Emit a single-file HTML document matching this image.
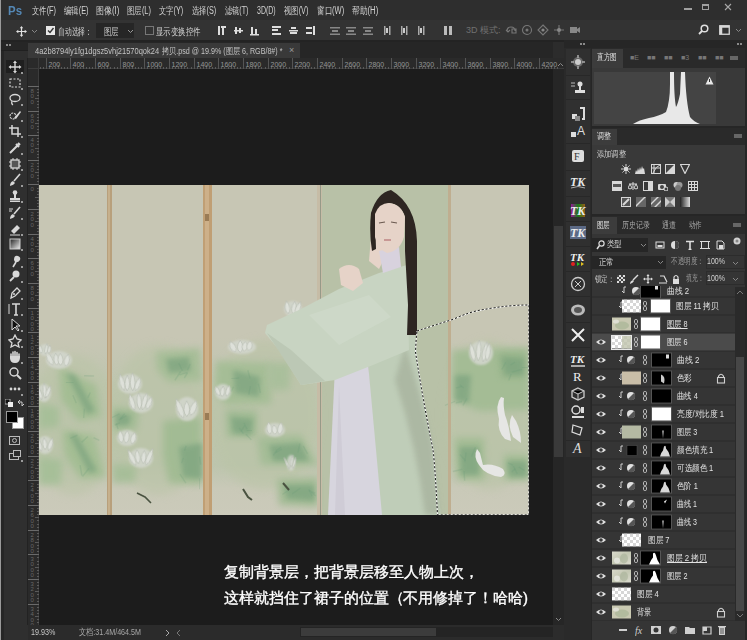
<!DOCTYPE html><html><head><meta charset="utf-8"><style>
html,body{margin:0;padding:0;}
body{width:747px;height:640px;overflow:hidden;position:relative;background:#2c2c2c;font-family:"Liberation Sans", sans-serif;}
div,svg{box-sizing:border-box;}
</style></head><body>
<div style="position:absolute;left:0px;top:0px;width:747px;height:20px;background:#2e2e2e;"></div>
<div style="position:absolute;left:8px;top:2.70px;font-size:13px;line-height:15.60px;color:#5487b4;white-space:nowrap;transform:scaleX(0.8802);transform-origin:0 0;font-weight:bold;">Ps</div>
<div style="position:absolute;left:32px;top:5.30px;font-size:10px;line-height:12.00px;color:#d2d2d2;white-space:nowrap;transform:scaleX(0.7321);transform-origin:0 0;">文件(F)</div>
<div style="position:absolute;left:63.5px;top:5.30px;font-size:10px;line-height:12.00px;color:#d2d2d2;white-space:nowrap;transform:scaleX(0.7348);transform-origin:0 0;">编辑(E)</div>
<div style="position:absolute;left:96px;top:5.30px;font-size:10px;line-height:12.00px;color:#d2d2d2;white-space:nowrap;transform:scaleX(0.7979);transform-origin:0 0;">图像(I)</div>
<div style="position:absolute;left:127px;top:5.30px;font-size:10px;line-height:12.00px;color:#d2d2d2;white-space:nowrap;transform:scaleX(0.7445);transform-origin:0 0;">图层(L)</div>
<div style="position:absolute;left:159.4px;top:5.30px;font-size:10px;line-height:12.00px;color:#d2d2d2;white-space:nowrap;transform:scaleX(0.7288);transform-origin:0 0;">文字(Y)</div>
<div style="position:absolute;left:192.2px;top:5.30px;font-size:10px;line-height:12.00px;color:#d2d2d2;white-space:nowrap;transform:scaleX(0.7288);transform-origin:0 0;">选择(S)</div>
<div style="position:absolute;left:225px;top:5.30px;font-size:10px;line-height:12.00px;color:#d2d2d2;white-space:nowrap;transform:scaleX(0.7138);transform-origin:0 0;">滤镜(T)</div>
<div style="position:absolute;left:256.6px;top:5.30px;font-size:10px;line-height:12.00px;color:#d2d2d2;white-space:nowrap;transform:scaleX(0.7011);transform-origin:0 0;">3D(D)</div>
<div style="position:absolute;left:283.7px;top:5.30px;font-size:10px;line-height:12.00px;color:#d2d2d2;white-space:nowrap;transform:scaleX(0.7318);transform-origin:0 0;">视图(V)</div>
<div style="position:absolute;left:316.5px;top:5.30px;font-size:10px;line-height:12.00px;color:#d2d2d2;white-space:nowrap;transform:scaleX(0.7533);transform-origin:0 0;">窗口(W)</div>
<div style="position:absolute;left:352.1px;top:5.30px;font-size:10px;line-height:12.00px;color:#d2d2d2;white-space:nowrap;transform:scaleX(0.7760);transform-origin:0 0;">帮助(H)</div>
<div style="position:absolute;left:684px;top:8px;width:8px;height:1.5px;background:#a0a0a0;"></div>
<div style="position:absolute;left:702px;top:4px;width:7px;height:6px;background:transparent;border:1px solid #a0a0a0;border-top-width:2px;"></div>
<svg style="position:absolute;left:724px;top:3px;" width="8" height="8" viewBox="0 0 8 8"><path d="M1 1L7 7M7 1L1 7" stroke="#a8a8a8" stroke-width="1.1"/></svg>
<div style="position:absolute;left:0px;top:20px;width:747px;height:20px;background:#333333;"></div>
<div style="position:absolute;left:0px;top:40px;width:747px;height:2px;background:#232323;"></div>
<div style="position:absolute;left:0;top:0;width:1px;height:640px;background:#9a9a9a"></div>
<svg style="position:absolute;left:16px;top:26px;" width="11" height="11" viewBox="0 0 11 11"><path d="M5.5 1V10M1 5.5H10" stroke="#e0e0e0" stroke-width="1.2"/><path d="M5.5 0L3.8 2.3H7.2ZM5.5 11L3.8 8.7H7.2ZM0 5.5L2.3 3.8V7.2ZM11 5.5L8.7 3.8V7.2Z" fill="#e0e0e0"/></svg>
<svg style="position:absolute;left:31px;top:29px;" width="7" height="5" viewBox="0 0 7 5"><path d="M1 1L3.5 3.5L6 1" stroke="#888" fill="none"/></svg>
<div style="position:absolute;left:46px;top:26px;width:9px;height:9px;background:#e8e8e8;"></div>
<svg style="position:absolute;left:46px;top:26px;" width="9" height="9" viewBox="0 0 9 9"><path d="M2 4.5L4 6.5L7.5 2" stroke="#333" stroke-width="1.4" fill="none"/></svg>
<div style="position:absolute;left:58.2px;top:26.00px;font-size:10px;line-height:12.00px;color:#d0d0d0;white-space:nowrap;transform:scaleX(0.6820);transform-origin:0 0;">自动选择：</div>
<div style="position:absolute;left:96px;top:23px;width:38px;height:15px;background:#262626;"></div>
<div style="position:absolute;left:103.7px;top:26.00px;font-size:10px;line-height:12.00px;color:#d0d0d0;white-space:nowrap;transform:scaleX(0.7400);transform-origin:0 0;">图层</div>
<svg style="position:absolute;left:127px;top:29px;" width="7" height="5" viewBox="0 0 7 5"><path d="M1 1L3.5 3.5L6 1" stroke="#999" fill="none"/></svg>
<div style="position:absolute;left:145px;top:26px;width:9px;height:9px;background:transparent;border:1px solid #777;"></div>
<div style="position:absolute;left:156px;top:26.00px;font-size:10px;line-height:12.00px;color:#d0d0d0;white-space:nowrap;transform:scaleX(0.7400);transform-origin:0 0;">显示变换控件</div>
<svg style="position:absolute;left:217px;top:25px;" width="11" height="11" viewBox="0 0 11 11"><rect x="1" y="1" width="2" height="9" fill="#ddd"/><rect x="4" y="1" width="5" height="2" fill="#ddd"/><rect x="5" y="3" width="2" height="7" fill="#ddd"/></svg>
<svg style="position:absolute;left:233px;top:25px;" width="11" height="11" viewBox="0 0 11 11"><rect x="1" y="5" width="9" height="1.5" fill="#ddd"/><rect x="2" y="2" width="2" height="7" fill="#ddd"/><rect x="6" y="3" width="2" height="5" fill="#ddd"/></svg>
<svg style="position:absolute;left:249px;top:25px;" width="11" height="11" viewBox="0 0 11 11"><rect x="1" y="9" width="9" height="1.5" fill="#ddd"/><rect x="2" y="2" width="2" height="7" fill="#ddd"/><rect x="6" y="4" width="2" height="5" fill="#ddd"/></svg>
<svg style="position:absolute;left:271px;top:25px;" width="11" height="11" viewBox="0 0 11 11"><rect x="1" y="1" width="9" height="2" fill="#ddd"/><rect x="1" y="4" width="6" height="2" fill="#ddd"/><rect x="1" y="8" width="9" height="2" fill="#ddd"/></svg>
<svg style="position:absolute;left:288px;top:25px;" width="11" height="11" viewBox="0 0 11 11"><rect x="1" y="5" width="9" height="1.5" fill="#ddd"/><rect x="3" y="2" width="5" height="2" fill="#ddd"/><rect x="2" y="7" width="7" height="2" fill="#ddd"/></svg>
<svg style="position:absolute;left:304px;top:25px;" width="11" height="11" viewBox="0 0 11 11"><rect x="9" y="1" width="2" height="9" fill="#ddd"/><rect x="2" y="2" width="6" height="2" fill="#ddd"/><rect x="2" y="7" width="6" height="2" fill="#ddd"/></svg>
<svg style="position:absolute;left:329px;top:25px;" width="12" height="11" viewBox="0 0 12 11"><rect x="1" y="2" width="10" height="1.5" fill="#888"/><rect x="3" y="5" width="6" height="2" fill="#888"/><rect x="1" y="8.5" width="10" height="1.5" fill="#888"/></svg>
<svg style="position:absolute;left:345px;top:25px;" width="12" height="11" viewBox="0 0 12 11"><rect x="1" y="2" width="10" height="1.5" fill="#888"/><rect x="3" y="5" width="6" height="2" fill="#888"/><rect x="1" y="8.5" width="10" height="1.5" fill="#888"/></svg>
<svg style="position:absolute;left:362px;top:25px;" width="12" height="11" viewBox="0 0 12 11"><rect x="1" y="2" width="10" height="1.5" fill="#888"/><rect x="3" y="5" width="6" height="2" fill="#888"/><rect x="1" y="8.5" width="10" height="1.5" fill="#888"/></svg>
<svg style="position:absolute;left:382px;top:25px;" width="10" height="11" viewBox="0 0 10 11"><rect x="2" y="1" width="1.5" height="9" fill="#aaa"/><rect x="4" y="3" width="2" height="5" fill="#ccc"/><rect x="7" y="1" width="1.5" height="9" fill="#aaa"/></svg>
<svg style="position:absolute;left:399px;top:25px;" width="10" height="11" viewBox="0 0 10 11"><rect x="2" y="1" width="1.5" height="9" fill="#aaa"/><rect x="4" y="3" width="2" height="5" fill="#ccc"/><rect x="7" y="1" width="1.5" height="9" fill="#aaa"/></svg>
<svg style="position:absolute;left:416px;top:25px;" width="10" height="11" viewBox="0 0 10 11"><rect x="2" y="1" width="1.5" height="9" fill="#aaa"/><rect x="4" y="3" width="2" height="5" fill="#ccc"/><rect x="7" y="1" width="1.5" height="9" fill="#aaa"/></svg>
<svg style="position:absolute;left:443px;top:25px;" width="10" height="11" viewBox="0 0 10 11"><rect x="1" y="1" width="3" height="9" fill="#bbb"/><rect x="6" y="1" width="3" height="9" fill="#bbb"/></svg>
<div style="position:absolute;left:466px;top:25px;font-size:9px;line-height:11px;color:#707070;white-space:nowrap;">3D 模式:</div>
<svg style="position:absolute;left:505px;top:24px;" width="12" height="12" viewBox="0 0 12 12"><path d="M2 7Q2 3 6 3Q10 3 10 7M1 6L3 8L5 6M7 5H11V9H7Z" stroke="#777" fill="none" stroke-width="1.1"/></svg>
<svg style="position:absolute;left:521px;top:24px;" width="12" height="12" viewBox="0 0 12 12"><circle cx="6" cy="6" r="4.5" stroke="#777" fill="none" stroke-width="1.1"/><circle cx="6" cy="6" r="1.5" fill="#777"/></svg>
<svg style="position:absolute;left:537px;top:24px;" width="12" height="12" viewBox="0 0 12 12"><path d="M6 1L11 6L6 11L1 6Z" stroke="#777" fill="none" stroke-width="1.1"/><circle cx="6" cy="6" r="1.6" fill="#888"/></svg>
<svg style="position:absolute;left:553px;top:24px;" width="12" height="12" viewBox="0 0 12 12"><path d="M6 1V11M1 6H11" stroke="#777" stroke-width="1.1"/><circle cx="6" cy="6" r="2" fill="#888"/></svg>
<svg style="position:absolute;left:569px;top:24px;" width="12" height="12" viewBox="0 0 12 12"><rect x="1" y="3" width="7" height="6" fill="#888"/><path d="M8 5L11 3V9L8 7Z" fill="#888"/></svg>
<svg style="position:absolute;left:698px;top:24px;" width="11" height="11" viewBox="0 0 11 11"><circle cx="6.5" cy="4.5" r="3.3" stroke="#e0e0e0" stroke-width="1.5" fill="none"/><path d="M4 7L1 10" stroke="#e0e0e0" stroke-width="1.8"/></svg>
<svg style="position:absolute;left:719px;top:25px;" width="11" height="10" viewBox="0 0 11 10"><rect x="0.75" y="0.75" width="9.5" height="8.5" stroke="#d8d8d8" fill="none" stroke-width="1.3"/><rect x="0.75" y="0.75" width="9.5" height="2" fill="#d8d8d8"/><rect x="0.75" y="0.75" width="2.5" height="8.5" fill="#d8d8d8"/></svg>
<svg style="position:absolute;left:735px;top:28px;" width="7" height="5" viewBox="0 0 7 5"><path d="M1 1L3.5 3.5L6 1" stroke="#888" fill="none"/></svg>
<div style="position:absolute;left:1px;top:42px;width:27px;height:598px;background:#2f2f2f;"></div>
<div style="position:absolute;left:1px;top:42px;width:3px;height:598px;background:#262626;"></div>
<div style="position:absolute;left:27px;top:58px;width:1px;height:567px;background:#222222;"></div>
<div style="position:absolute;left:1px;top:42px;width:27px;height:8px;background:#262626;"></div>
<div style="position:absolute;left:6px;top:44px;width:2px;height:2px;background:#8a8a8a;"></div>
<div style="position:absolute;left:9px;top:44px;width:2px;height:2px;background:#8a8a8a;"></div>
<div style="position:absolute;left:1px;top:50px;width:27px;height:1px;background:#202020;"></div>
<div style="position:absolute;left:6px;top:60px;width:18px;height:13px;background:#1f1f1f;"></div>
<svg style="position:absolute;left:8px;top:60px;" width="14" height="14" viewBox="0 0 14 14"><path d="M7 2V12M2 7H12" stroke="#d8d8d8" stroke-width="1.4"/><path d="M7 0.5L5 3H9ZM7 13.5L5 11H9ZM0.5 7L3 5V9ZM13.5 7L11 5V9Z" fill="#d8d8d8"/></svg>
<svg style="position:absolute;left:8px;top:76px;" width="14" height="14" viewBox="0 0 14 14"><rect x="2" y="3" width="10" height="8" stroke="#d8d8d8" stroke-dasharray="2 1.5" fill="none" stroke-width="1.2"/></svg>
<svg style="position:absolute;left:8px;top:92px;" width="14" height="14" viewBox="0 0 14 14"><ellipse cx="7" cy="6" rx="5" ry="3.5" stroke="#d8d8d8" fill="none" stroke-width="1.3"/><path d="M4 9Q3 12 5 13" stroke="#d8d8d8" fill="none" stroke-width="1.2"/></svg>
<svg style="position:absolute;left:8px;top:108px;" width="14" height="14" viewBox="0 0 14 14"><circle cx="5" cy="8" r="3" stroke="#d8d8d8" fill="none" stroke-width="1.2" stroke-dasharray="2 1"/><path d="M6 10L12 3L13 4L8 11Z" fill="#d8d8d8"/></svg>
<svg style="position:absolute;left:8px;top:124px;" width="14" height="14" viewBox="0 0 14 14"><path d="M4 1V10H13M1 4H10V13" stroke="#d8d8d8" stroke-width="1.5" fill="none"/></svg>
<svg style="position:absolute;left:8px;top:141px;" width="14" height="14" viewBox="0 0 14 14"><path d="M2 12L9 5M8 3L11 6M10 2L12 4" stroke="#d8d8d8" stroke-width="2" fill="none"/></svg>
<svg style="position:absolute;left:8px;top:157px;" width="14" height="14" viewBox="0 0 14 14"><rect x="3" y="3" width="8" height="8" stroke="#d8d8d8" fill="#555" stroke-width="1.3"/><path d="M5 1V3M9 1V3M5 11V13M9 11V13M1 5H3M1 9H3M11 5H13M11 9H13" stroke="#d8d8d8"/></svg>
<svg style="position:absolute;left:8px;top:173px;" width="14" height="14" viewBox="0 0 14 14"><path d="M12 1L6 8" stroke="#d8d8d8" stroke-width="1.6"/><path d="M5 8Q2 9 2 13Q6 12 7 10Z" fill="#d8d8d8"/></svg>
<svg style="position:absolute;left:8px;top:189px;" width="14" height="14" viewBox="0 0 14 14"><circle cx="7" cy="3.5" r="2.3" fill="#d8d8d8"/><rect x="6" y="5" width="2" height="4" fill="#d8d8d8"/><rect x="2" y="9" width="10" height="2.5" fill="#d8d8d8"/><rect x="2" y="12" width="10" height="1" fill="#d8d8d8"/></svg>
<svg style="position:absolute;left:8px;top:206px;" width="14" height="14" viewBox="0 0 14 14"><path d="M12 1L6 8" stroke="#d8d8d8" stroke-width="1.6"/><path d="M5 8Q2 9 2 13Q6 12 7 10Z" fill="#d8d8d8"/><path d="M1 3H5M1 5H4" stroke="#d8d8d8"/></svg>
<svg style="position:absolute;left:8px;top:222px;" width="14" height="14" viewBox="0 0 14 14"><path d="M3 9L9 3L12 6L6 12Z" fill="#d8d8d8"/><path d="M2 13H12" stroke="#d8d8d8"/></svg>
<svg style="position:absolute;left:8px;top:237px;" width="14" height="14" viewBox="0 0 14 14"><defs><linearGradient id="gg" x1="0" x2="1" y1="0" y2="1"><stop offset="0" stop-color="#222"/><stop offset="1" stop-color="#eee"/></linearGradient></defs><rect x="2" y="2" width="10" height="10" fill="url(#gg)" stroke="#ccc"/></svg>
<svg style="position:absolute;left:8px;top:254px;" width="14" height="14" viewBox="0 0 14 14"><path d="M5 13L8 8" stroke="#d8d8d8" stroke-width="1.6"/><path d="M6 6Q6 1 10 2Q13 3 12 6Q10 9 7 8Z" fill="#d8d8d8"/></svg>
<svg style="position:absolute;left:8px;top:269px;" width="14" height="14" viewBox="0 0 14 14"><circle cx="8" cy="5" r="3.5" fill="#d8d8d8"/><path d="M6 8L2 12" stroke="#d8d8d8" stroke-width="1.8"/></svg>
<svg style="position:absolute;left:8px;top:286px;" width="14" height="14" viewBox="0 0 14 14"><path d="M3 12L4 7L9 2L12 5L7 10Z" stroke="#d8d8d8" fill="none" stroke-width="1.3"/><circle cx="6" cy="8" r="1" fill="#d8d8d8"/></svg>
<svg style="position:absolute;left:8px;top:302px;" width="14" height="14" viewBox="0 0 14 14"><path d="M4 2H12M8 2V13M6 13H10" stroke="#d8d8d8" stroke-width="1.6"/><path d="M1 2V12" stroke="#d8d8d8" stroke-width="1"/></svg>
<svg style="position:absolute;left:8px;top:318px;" width="14" height="14" viewBox="0 0 14 14"><path d="M4 1L4 12L7 9L10 13L11 12L8 8L12 8Z" fill="#111" stroke="#d8d8d8" stroke-width="1"/></svg>
<svg style="position:absolute;left:8px;top:334px;" width="14" height="14" viewBox="0 0 14 14"><path d="M7 1L9 5L13 6L10 9L11 13L7 11L3 13L4 9L1 6L5 5Z" stroke="#d8d8d8" fill="none" stroke-width="1.3"/></svg>
<svg style="position:absolute;left:8px;top:350px;" width="14" height="14" viewBox="0 0 14 14"><path d="M3 8V4M5 7V2M7 7V1.5M9 7V2.5M11 8V4" stroke="#d8d8d8" stroke-width="1.6" stroke-linecap="round"/><path d="M2 8Q2 13 7 13Q12 13 12 7V6H2Z" fill="#d8d8d8"/></svg>
<svg style="position:absolute;left:8px;top:366px;" width="14" height="14" viewBox="0 0 14 14"><circle cx="6" cy="6" r="4" stroke="#d8d8d8" fill="none" stroke-width="1.5"/><path d="M9 9L13 13" stroke="#d8d8d8" stroke-width="2"/></svg>
<svg style="position:absolute;left:8px;top:382px;" width="14" height="14" viewBox="0 0 14 14"><circle cx="3" cy="7" r="1.4" fill="#d8d8d8"/><circle cx="7" cy="7" r="1.4" fill="#d8d8d8"/><circle cx="11" cy="7" r="1.4" fill="#d8d8d8"/></svg>
<div style="position:absolute;left:21px;top:72px;width:2px;height:2px;background:#9a9a9a;"></div>
<div style="position:absolute;left:21px;top:88px;width:2px;height:2px;background:#9a9a9a;"></div>
<div style="position:absolute;left:21px;top:104px;width:2px;height:2px;background:#9a9a9a;"></div>
<div style="position:absolute;left:21px;top:120px;width:2px;height:2px;background:#9a9a9a;"></div>
<div style="position:absolute;left:21px;top:136px;width:2px;height:2px;background:#9a9a9a;"></div>
<div style="position:absolute;left:21px;top:153px;width:2px;height:2px;background:#9a9a9a;"></div>
<div style="position:absolute;left:21px;top:169px;width:2px;height:2px;background:#9a9a9a;"></div>
<div style="position:absolute;left:21px;top:185px;width:2px;height:2px;background:#9a9a9a;"></div>
<div style="position:absolute;left:21px;top:201px;width:2px;height:2px;background:#9a9a9a;"></div>
<div style="position:absolute;left:21px;top:218px;width:2px;height:2px;background:#9a9a9a;"></div>
<div style="position:absolute;left:21px;top:234px;width:2px;height:2px;background:#9a9a9a;"></div>
<div style="position:absolute;left:21px;top:249px;width:2px;height:2px;background:#9a9a9a;"></div>
<div style="position:absolute;left:21px;top:266px;width:2px;height:2px;background:#9a9a9a;"></div>
<div style="position:absolute;left:21px;top:281px;width:2px;height:2px;background:#9a9a9a;"></div>
<div style="position:absolute;left:21px;top:298px;width:2px;height:2px;background:#9a9a9a;"></div>
<div style="position:absolute;left:21px;top:314px;width:2px;height:2px;background:#9a9a9a;"></div>
<div style="position:absolute;left:21px;top:330px;width:2px;height:2px;background:#9a9a9a;"></div>
<div style="position:absolute;left:21px;top:346px;width:2px;height:2px;background:#9a9a9a;"></div>
<div style="position:absolute;left:21px;top:362px;width:2px;height:2px;background:#9a9a9a;"></div>
<div style="position:absolute;left:21px;top:394px;width:2px;height:2px;background:#9a9a9a;"></div>
<svg style="position:absolute;left:5px;top:399px;" width="8" height="8" viewBox="0 0 8 8"><rect x="0" y="0" width="5" height="5" fill="#111" stroke="#ccc" stroke-width="0.8"/><rect x="3" y="3" width="5" height="5" fill="#eee"/></svg>
<svg style="position:absolute;left:17px;top:399px;" width="8" height="8" viewBox="0 0 8 8"><path d="M1 3H5V7M3 1L1 3L3 5M5 7L7 5" stroke="#ccc" fill="none"/></svg>
<div style="position:absolute;left:12px;top:417px;width:12px;height:12px;background:#ffffff;border:1px solid #9a9a9a;"></div>
<div style="position:absolute;left:6px;top:411px;width:12px;height:12px;background:#000000;border:1px solid #9a9a9a;"></div>
<div style="position:absolute;left:9px;top:436px;width:11px;height:9px;background:transparent;border:1px solid #bbb;"></div>
<div style="position:absolute;left:12px;top:438px;width:5px;height:5px;background:transparent;border:1px solid #bbb;border-radius:50%;"></div>
<div style="position:absolute;left:9px;top:453px;width:10px;height:7px;background:#2c2c2c;border:1px solid #bbb;"></div>
<div style="position:absolute;left:13px;top:450px;width:8px;height:7px;background:#2c2c2c;border:1px solid #bbb;"></div>
<div style="position:absolute;left:21px;top:460px;width:2px;height:2px;background:#9a9a9a;"></div>
<div style="position:absolute;left:28px;top:42px;width:525px;height:16px;background:#262626;"></div>
<div style="position:absolute;left:28px;top:43px;width:272px;height:15px;background:#393939;"></div>
<div style="position:absolute;left:35.1px;top:46.10px;font-size:9px;line-height:10.80px;color:#c4c4c4;white-space:nowrap;transform:scaleX(0.8321);transform-origin:0 0;">4a2b8794ly1fg1dgsz5vhj21570qok24</div>
<div style="position:absolute;left:162px;top:46.10px;font-size:9px;line-height:10.80px;color:#c4c4c4;white-space:nowrap;transform:scaleX(0.7944);transform-origin:0 0;">拷贝.psd @ 19.9% (图层 6, RGB/8#) *</div>
<div style="position:absolute;left:289px;top:45px;font-size:9px;line-height:11px;color:#999;white-space:nowrap;">×</div>
<div style="position:absolute;left:28px;top:58px;width:536px;height:11px;background:#2a2a2a;"></div>
<div style="position:absolute;left:28px;top:58px;width:11px;height:567px;background:#2a2a2a;"></div>
<div style="position:absolute;left:28px;top:68px;width:536px;height:1px;background:#3c3c3c;"></div>
<div style="position:absolute;left:38px;top:58px;width:1px;height:567px;background:#3c3c3c;"></div>
<svg style="position:absolute;left:0px;top:0px;" width="747" height="70" viewBox="0 0 747 70"><rect x="46" y="58" width="1" height="11" fill="#555555"/><rect x="49" y="67" width="1" height="2" fill="#5a5a5a"/><rect x="52" y="67" width="1" height="2" fill="#5a5a5a"/><rect x="55" y="67" width="1" height="2" fill="#5a5a5a"/><rect x="58" y="65" width="1" height="4" fill="#5a5a5a"/><rect x="61" y="67" width="1" height="2" fill="#5a5a5a"/><rect x="64" y="67" width="1" height="2" fill="#5a5a5a"/><rect x="67" y="67" width="1" height="2" fill="#5a5a5a"/><text x="48.5" y="66.5" font-size="7" fill="#959595" font-family="Liberation Sans">200</text><rect x="70" y="58" width="1" height="11" fill="#555555"/><rect x="73" y="67" width="1" height="2" fill="#5a5a5a"/><rect x="77" y="67" width="1" height="2" fill="#5a5a5a"/><rect x="80" y="67" width="1" height="2" fill="#5a5a5a"/><rect x="83" y="65" width="1" height="4" fill="#5a5a5a"/><rect x="86" y="67" width="1" height="2" fill="#5a5a5a"/><rect x="89" y="67" width="1" height="2" fill="#5a5a5a"/><rect x="92" y="67" width="1" height="2" fill="#5a5a5a"/><text x="72.5" y="66.5" font-size="7" fill="#959595" font-family="Liberation Sans">400</text><rect x="95" y="58" width="1" height="11" fill="#555555"/><rect x="98" y="67" width="1" height="2" fill="#5a5a5a"/><rect x="101" y="67" width="1" height="2" fill="#5a5a5a"/><rect x="104" y="67" width="1" height="2" fill="#5a5a5a"/><rect x="107" y="65" width="1" height="4" fill="#5a5a5a"/><rect x="110" y="67" width="1" height="2" fill="#5a5a5a"/><rect x="114" y="67" width="1" height="2" fill="#5a5a5a"/><rect x="117" y="67" width="1" height="2" fill="#5a5a5a"/><text x="97.5" y="66.5" font-size="7" fill="#959595" font-family="Liberation Sans">600</text><rect x="120" y="58" width="1" height="11" fill="#555555"/><rect x="123" y="67" width="1" height="2" fill="#5a5a5a"/><rect x="126" y="67" width="1" height="2" fill="#5a5a5a"/><rect x="129" y="67" width="1" height="2" fill="#5a5a5a"/><rect x="132" y="65" width="1" height="4" fill="#5a5a5a"/><rect x="135" y="67" width="1" height="2" fill="#5a5a5a"/><rect x="138" y="67" width="1" height="2" fill="#5a5a5a"/><rect x="141" y="67" width="1" height="2" fill="#5a5a5a"/><text x="122.5" y="66.5" font-size="7" fill="#959595" font-family="Liberation Sans">800</text><rect x="144" y="58" width="1" height="11" fill="#555555"/><rect x="147" y="67" width="1" height="2" fill="#5a5a5a"/><rect x="151" y="67" width="1" height="2" fill="#5a5a5a"/><rect x="154" y="67" width="1" height="2" fill="#5a5a5a"/><rect x="157" y="65" width="1" height="4" fill="#5a5a5a"/><rect x="160" y="67" width="1" height="2" fill="#5a5a5a"/><rect x="163" y="67" width="1" height="2" fill="#5a5a5a"/><rect x="166" y="67" width="1" height="2" fill="#5a5a5a"/><text x="146.5" y="66.5" font-size="7" fill="#959595" font-family="Liberation Sans">1000</text><rect x="169" y="58" width="1" height="11" fill="#555555"/><rect x="172" y="67" width="1" height="2" fill="#5a5a5a"/><rect x="175" y="67" width="1" height="2" fill="#5a5a5a"/><rect x="178" y="67" width="1" height="2" fill="#5a5a5a"/><rect x="181" y="65" width="1" height="4" fill="#5a5a5a"/><rect x="184" y="67" width="1" height="2" fill="#5a5a5a"/><rect x="187" y="67" width="1" height="2" fill="#5a5a5a"/><rect x="191" y="67" width="1" height="2" fill="#5a5a5a"/><text x="171.5" y="66.5" font-size="7" fill="#959595" font-family="Liberation Sans">1200</text><rect x="194" y="58" width="1" height="11" fill="#555555"/><rect x="197" y="67" width="1" height="2" fill="#5a5a5a"/><rect x="200" y="67" width="1" height="2" fill="#5a5a5a"/><rect x="203" y="67" width="1" height="2" fill="#5a5a5a"/><rect x="206" y="65" width="1" height="4" fill="#5a5a5a"/><rect x="209" y="67" width="1" height="2" fill="#5a5a5a"/><rect x="212" y="67" width="1" height="2" fill="#5a5a5a"/><rect x="215" y="67" width="1" height="2" fill="#5a5a5a"/><text x="196.5" y="66.5" font-size="7" fill="#959595" font-family="Liberation Sans">1400</text><rect x="218" y="58" width="1" height="11" fill="#555555"/><rect x="221" y="67" width="1" height="2" fill="#5a5a5a"/><rect x="224" y="67" width="1" height="2" fill="#5a5a5a"/><rect x="228" y="67" width="1" height="2" fill="#5a5a5a"/><rect x="231" y="65" width="1" height="4" fill="#5a5a5a"/><rect x="234" y="67" width="1" height="2" fill="#5a5a5a"/><rect x="237" y="67" width="1" height="2" fill="#5a5a5a"/><rect x="240" y="67" width="1" height="2" fill="#5a5a5a"/><text x="220.5" y="66.5" font-size="7" fill="#959595" font-family="Liberation Sans">1600</text><rect x="243" y="58" width="1" height="11" fill="#555555"/><rect x="246" y="67" width="1" height="2" fill="#5a5a5a"/><rect x="249" y="67" width="1" height="2" fill="#5a5a5a"/><rect x="252" y="67" width="1" height="2" fill="#5a5a5a"/><rect x="255" y="65" width="1" height="4" fill="#5a5a5a"/><rect x="258" y="67" width="1" height="2" fill="#5a5a5a"/><rect x="261" y="67" width="1" height="2" fill="#5a5a5a"/><rect x="265" y="67" width="1" height="2" fill="#5a5a5a"/><text x="245.5" y="66.5" font-size="7" fill="#959595" font-family="Liberation Sans">1800</text><rect x="268" y="58" width="1" height="11" fill="#555555"/><rect x="271" y="67" width="1" height="2" fill="#5a5a5a"/><rect x="274" y="67" width="1" height="2" fill="#5a5a5a"/><rect x="277" y="67" width="1" height="2" fill="#5a5a5a"/><rect x="280" y="65" width="1" height="4" fill="#5a5a5a"/><rect x="283" y="67" width="1" height="2" fill="#5a5a5a"/><rect x="286" y="67" width="1" height="2" fill="#5a5a5a"/><rect x="289" y="67" width="1" height="2" fill="#5a5a5a"/><text x="270.5" y="66.5" font-size="7" fill="#959595" font-family="Liberation Sans">2000</text><rect x="292" y="58" width="1" height="11" fill="#555555"/><rect x="295" y="67" width="1" height="2" fill="#5a5a5a"/><rect x="298" y="67" width="1" height="2" fill="#5a5a5a"/><rect x="302" y="67" width="1" height="2" fill="#5a5a5a"/><rect x="305" y="65" width="1" height="4" fill="#5a5a5a"/><rect x="308" y="67" width="1" height="2" fill="#5a5a5a"/><rect x="311" y="67" width="1" height="2" fill="#5a5a5a"/><rect x="314" y="67" width="1" height="2" fill="#5a5a5a"/><text x="294.5" y="66.5" font-size="7" fill="#959595" font-family="Liberation Sans">2200</text><rect x="317" y="58" width="1" height="11" fill="#555555"/><rect x="320" y="67" width="1" height="2" fill="#5a5a5a"/><rect x="323" y="67" width="1" height="2" fill="#5a5a5a"/><rect x="326" y="67" width="1" height="2" fill="#5a5a5a"/><rect x="329" y="65" width="1" height="4" fill="#5a5a5a"/><rect x="332" y="67" width="1" height="2" fill="#5a5a5a"/><rect x="335" y="67" width="1" height="2" fill="#5a5a5a"/><rect x="339" y="67" width="1" height="2" fill="#5a5a5a"/><text x="319.5" y="66.5" font-size="7" fill="#959595" font-family="Liberation Sans">2400</text><rect x="342" y="58" width="1" height="11" fill="#555555"/><rect x="345" y="67" width="1" height="2" fill="#5a5a5a"/><rect x="348" y="67" width="1" height="2" fill="#5a5a5a"/><rect x="351" y="67" width="1" height="2" fill="#5a5a5a"/><rect x="354" y="65" width="1" height="4" fill="#5a5a5a"/><rect x="357" y="67" width="1" height="2" fill="#5a5a5a"/><rect x="360" y="67" width="1" height="2" fill="#5a5a5a"/><rect x="363" y="67" width="1" height="2" fill="#5a5a5a"/><text x="344.5" y="66.5" font-size="7" fill="#959595" font-family="Liberation Sans">2600</text><rect x="366" y="58" width="1" height="11" fill="#555555"/><rect x="369" y="67" width="1" height="2" fill="#5a5a5a"/><rect x="372" y="67" width="1" height="2" fill="#5a5a5a"/><rect x="376" y="67" width="1" height="2" fill="#5a5a5a"/><rect x="379" y="65" width="1" height="4" fill="#5a5a5a"/><rect x="382" y="67" width="1" height="2" fill="#5a5a5a"/><rect x="385" y="67" width="1" height="2" fill="#5a5a5a"/><rect x="388" y="67" width="1" height="2" fill="#5a5a5a"/><text x="368.5" y="66.5" font-size="7" fill="#959595" font-family="Liberation Sans">2800</text><rect x="391" y="58" width="1" height="11" fill="#555555"/><rect x="394" y="67" width="1" height="2" fill="#5a5a5a"/><rect x="397" y="67" width="1" height="2" fill="#5a5a5a"/><rect x="400" y="67" width="1" height="2" fill="#5a5a5a"/><rect x="403" y="65" width="1" height="4" fill="#5a5a5a"/><rect x="406" y="67" width="1" height="2" fill="#5a5a5a"/><rect x="409" y="67" width="1" height="2" fill="#5a5a5a"/><rect x="413" y="67" width="1" height="2" fill="#5a5a5a"/><text x="393.5" y="66.5" font-size="7" fill="#959595" font-family="Liberation Sans">3000</text><rect x="416" y="58" width="1" height="11" fill="#555555"/><rect x="419" y="67" width="1" height="2" fill="#5a5a5a"/><rect x="422" y="67" width="1" height="2" fill="#5a5a5a"/><rect x="425" y="67" width="1" height="2" fill="#5a5a5a"/><rect x="428" y="65" width="1" height="4" fill="#5a5a5a"/><rect x="431" y="67" width="1" height="2" fill="#5a5a5a"/><rect x="434" y="67" width="1" height="2" fill="#5a5a5a"/><rect x="437" y="67" width="1" height="2" fill="#5a5a5a"/><text x="418.5" y="66.5" font-size="7" fill="#959595" font-family="Liberation Sans">3200</text><rect x="440" y="58" width="1" height="11" fill="#555555"/><rect x="443" y="67" width="1" height="2" fill="#5a5a5a"/><rect x="446" y="67" width="1" height="2" fill="#5a5a5a"/><rect x="450" y="67" width="1" height="2" fill="#5a5a5a"/><rect x="453" y="65" width="1" height="4" fill="#5a5a5a"/><rect x="456" y="67" width="1" height="2" fill="#5a5a5a"/><rect x="459" y="67" width="1" height="2" fill="#5a5a5a"/><rect x="462" y="67" width="1" height="2" fill="#5a5a5a"/><text x="442.5" y="66.5" font-size="7" fill="#959595" font-family="Liberation Sans">3400</text><rect x="465" y="58" width="1" height="11" fill="#555555"/><rect x="468" y="67" width="1" height="2" fill="#5a5a5a"/><rect x="471" y="67" width="1" height="2" fill="#5a5a5a"/><rect x="474" y="67" width="1" height="2" fill="#5a5a5a"/><rect x="477" y="65" width="1" height="4" fill="#5a5a5a"/><rect x="480" y="67" width="1" height="2" fill="#5a5a5a"/><rect x="483" y="67" width="1" height="2" fill="#5a5a5a"/><rect x="486" y="67" width="1" height="2" fill="#5a5a5a"/><text x="467.5" y="66.5" font-size="7" fill="#959595" font-family="Liberation Sans">3600</text><rect x="490" y="58" width="1" height="11" fill="#555555"/><rect x="493" y="67" width="1" height="2" fill="#5a5a5a"/><rect x="496" y="67" width="1" height="2" fill="#5a5a5a"/><rect x="499" y="67" width="1" height="2" fill="#5a5a5a"/><rect x="502" y="65" width="1" height="4" fill="#5a5a5a"/><rect x="505" y="67" width="1" height="2" fill="#5a5a5a"/><rect x="508" y="67" width="1" height="2" fill="#5a5a5a"/><rect x="511" y="67" width="1" height="2" fill="#5a5a5a"/><text x="492.5" y="66.5" font-size="7" fill="#959595" font-family="Liberation Sans">3800</text><rect x="514" y="58" width="1" height="11" fill="#555555"/><rect x="517" y="67" width="1" height="2" fill="#5a5a5a"/><rect x="520" y="67" width="1" height="2" fill="#5a5a5a"/><rect x="523" y="67" width="1" height="2" fill="#5a5a5a"/><rect x="527" y="65" width="1" height="4" fill="#5a5a5a"/><rect x="530" y="67" width="1" height="2" fill="#5a5a5a"/><rect x="533" y="67" width="1" height="2" fill="#5a5a5a"/><rect x="536" y="67" width="1" height="2" fill="#5a5a5a"/><text x="516.5" y="66.5" font-size="7" fill="#959595" font-family="Liberation Sans">4000</text><rect x="539" y="58" width="1" height="11" fill="#555555"/><rect x="542" y="67" width="1" height="2" fill="#5a5a5a"/><rect x="545" y="67" width="1" height="2" fill="#5a5a5a"/><rect x="548" y="67" width="1" height="2" fill="#5a5a5a"/><rect x="551" y="65" width="1" height="4" fill="#5a5a5a"/><rect x="554" y="67" width="1" height="2" fill="#5a5a5a"/><rect x="557" y="67" width="1" height="2" fill="#5a5a5a"/><text x="541.5" y="66.5" font-size="7" fill="#959595" font-family="Liberation Sans">4200</text><rect x="43" y="67" width="1" height="2" fill="#5a5a5a"/><rect x="40" y="67" width="1" height="2" fill="#5a5a5a"/><path d="M558 66L560.5 63.5L563 66" stroke="#888" fill="none"/></svg>
<svg style="position:absolute;left:0px;top:0px;" width="40" height="640" viewBox="0 0 40 640"><rect x="28" y="86" width="11" height="1" fill="#6a6a6a"/><text x="30.5" y="93.0" font-size="6" fill="#666666" font-family="Liberation Sans">8</text><text x="30.5" y="98.3" font-size="6" fill="#666666" font-family="Liberation Sans">0</text><text x="30.5" y="103.6" font-size="6" fill="#666666" font-family="Liberation Sans">0</text><rect x="37" y="89" width="2" height="1" fill="#5a5a5a"/><rect x="37" y="92" width="2" height="1" fill="#5a5a5a"/><rect x="37" y="95" width="2" height="1" fill="#5a5a5a"/><rect x="35" y="98" width="4" height="1" fill="#5a5a5a"/><rect x="37" y="101" width="2" height="1" fill="#5a5a5a"/><rect x="37" y="104" width="2" height="1" fill="#5a5a5a"/><rect x="37" y="107" width="2" height="1" fill="#5a5a5a"/><rect x="28" y="111" width="11" height="1" fill="#6a6a6a"/><text x="30.5" y="118.0" font-size="6" fill="#666666" font-family="Liberation Sans">6</text><text x="30.5" y="123.3" font-size="6" fill="#666666" font-family="Liberation Sans">0</text><text x="30.5" y="128.6" font-size="6" fill="#666666" font-family="Liberation Sans">0</text><rect x="37" y="114" width="2" height="1" fill="#5a5a5a"/><rect x="37" y="117" width="2" height="1" fill="#5a5a5a"/><rect x="37" y="120" width="2" height="1" fill="#5a5a5a"/><rect x="35" y="123" width="4" height="1" fill="#5a5a5a"/><rect x="37" y="126" width="2" height="1" fill="#5a5a5a"/><rect x="37" y="129" width="2" height="1" fill="#5a5a5a"/><rect x="37" y="132" width="2" height="1" fill="#5a5a5a"/><rect x="28" y="135" width="11" height="1" fill="#6a6a6a"/><text x="30.5" y="142.0" font-size="6" fill="#666666" font-family="Liberation Sans">4</text><text x="30.5" y="147.3" font-size="6" fill="#666666" font-family="Liberation Sans">0</text><text x="30.5" y="152.6" font-size="6" fill="#666666" font-family="Liberation Sans">0</text><rect x="37" y="138" width="2" height="1" fill="#5a5a5a"/><rect x="37" y="141" width="2" height="1" fill="#5a5a5a"/><rect x="37" y="144" width="2" height="1" fill="#5a5a5a"/><rect x="35" y="148" width="4" height="1" fill="#5a5a5a"/><rect x="37" y="151" width="2" height="1" fill="#5a5a5a"/><rect x="37" y="154" width="2" height="1" fill="#5a5a5a"/><rect x="37" y="157" width="2" height="1" fill="#5a5a5a"/><rect x="28" y="160" width="11" height="1" fill="#6a6a6a"/><text x="30.5" y="167.0" font-size="6" fill="#666666" font-family="Liberation Sans">2</text><text x="30.5" y="172.3" font-size="6" fill="#666666" font-family="Liberation Sans">0</text><text x="30.5" y="177.6" font-size="6" fill="#666666" font-family="Liberation Sans">0</text><rect x="37" y="163" width="2" height="1" fill="#5a5a5a"/><rect x="37" y="166" width="2" height="1" fill="#5a5a5a"/><rect x="37" y="169" width="2" height="1" fill="#5a5a5a"/><rect x="35" y="172" width="4" height="1" fill="#5a5a5a"/><rect x="37" y="175" width="2" height="1" fill="#5a5a5a"/><rect x="37" y="178" width="2" height="1" fill="#5a5a5a"/><rect x="37" y="181" width="2" height="1" fill="#5a5a5a"/><rect x="28" y="184" width="11" height="1" fill="#6a6a6a"/><text x="30.5" y="191.0" font-size="6" fill="#666666" font-family="Liberation Sans">0</text><rect x="37" y="188" width="2" height="1" fill="#5a5a5a"/><rect x="37" y="191" width="2" height="1" fill="#5a5a5a"/><rect x="37" y="194" width="2" height="1" fill="#5a5a5a"/><rect x="35" y="197" width="4" height="1" fill="#5a5a5a"/><rect x="37" y="200" width="2" height="1" fill="#5a5a5a"/><rect x="37" y="203" width="2" height="1" fill="#5a5a5a"/><rect x="37" y="206" width="2" height="1" fill="#5a5a5a"/><rect x="28" y="209" width="11" height="1" fill="#6a6a6a"/><text x="30.5" y="216.0" font-size="6" fill="#666666" font-family="Liberation Sans">2</text><text x="30.5" y="221.3" font-size="6" fill="#666666" font-family="Liberation Sans">0</text><text x="30.5" y="226.6" font-size="6" fill="#666666" font-family="Liberation Sans">0</text><rect x="37" y="212" width="2" height="1" fill="#5a5a5a"/><rect x="37" y="215" width="2" height="1" fill="#5a5a5a"/><rect x="37" y="218" width="2" height="1" fill="#5a5a5a"/><rect x="35" y="221" width="4" height="1" fill="#5a5a5a"/><rect x="37" y="225" width="2" height="1" fill="#5a5a5a"/><rect x="37" y="228" width="2" height="1" fill="#5a5a5a"/><rect x="37" y="231" width="2" height="1" fill="#5a5a5a"/><rect x="28" y="234" width="11" height="1" fill="#6a6a6a"/><text x="30.5" y="241.0" font-size="6" fill="#666666" font-family="Liberation Sans">4</text><text x="30.5" y="246.3" font-size="6" fill="#666666" font-family="Liberation Sans">0</text><text x="30.5" y="251.6" font-size="6" fill="#666666" font-family="Liberation Sans">0</text><rect x="37" y="237" width="2" height="1" fill="#5a5a5a"/><rect x="37" y="240" width="2" height="1" fill="#5a5a5a"/><rect x="37" y="243" width="2" height="1" fill="#5a5a5a"/><rect x="35" y="246" width="4" height="1" fill="#5a5a5a"/><rect x="37" y="249" width="2" height="1" fill="#5a5a5a"/><rect x="37" y="252" width="2" height="1" fill="#5a5a5a"/><rect x="37" y="255" width="2" height="1" fill="#5a5a5a"/><rect x="28" y="258" width="11" height="1" fill="#6a6a6a"/><text x="30.5" y="265.0" font-size="6" fill="#666666" font-family="Liberation Sans">6</text><text x="30.5" y="270.3" font-size="6" fill="#666666" font-family="Liberation Sans">0</text><text x="30.5" y="275.6" font-size="6" fill="#666666" font-family="Liberation Sans">0</text><rect x="37" y="262" width="2" height="1" fill="#5a5a5a"/><rect x="37" y="265" width="2" height="1" fill="#5a5a5a"/><rect x="37" y="268" width="2" height="1" fill="#5a5a5a"/><rect x="35" y="271" width="4" height="1" fill="#5a5a5a"/><rect x="37" y="274" width="2" height="1" fill="#5a5a5a"/><rect x="37" y="277" width="2" height="1" fill="#5a5a5a"/><rect x="37" y="280" width="2" height="1" fill="#5a5a5a"/><rect x="28" y="283" width="11" height="1" fill="#6a6a6a"/><text x="30.5" y="290.0" font-size="6" fill="#666666" font-family="Liberation Sans">8</text><text x="30.5" y="295.3" font-size="6" fill="#666666" font-family="Liberation Sans">0</text><text x="30.5" y="300.6" font-size="6" fill="#666666" font-family="Liberation Sans">0</text><rect x="37" y="286" width="2" height="1" fill="#5a5a5a"/><rect x="37" y="289" width="2" height="1" fill="#5a5a5a"/><rect x="37" y="292" width="2" height="1" fill="#5a5a5a"/><rect x="35" y="295" width="4" height="1" fill="#5a5a5a"/><rect x="37" y="299" width="2" height="1" fill="#5a5a5a"/><rect x="37" y="302" width="2" height="1" fill="#5a5a5a"/><rect x="37" y="305" width="2" height="1" fill="#5a5a5a"/><rect x="28" y="308" width="11" height="1" fill="#6a6a6a"/><text x="30.5" y="315.0" font-size="6" fill="#666666" font-family="Liberation Sans">1</text><text x="30.5" y="320.3" font-size="6" fill="#666666" font-family="Liberation Sans">0</text><text x="30.5" y="325.6" font-size="6" fill="#666666" font-family="Liberation Sans">0</text><text x="30.5" y="330.9" font-size="6" fill="#666666" font-family="Liberation Sans">0</text><rect x="37" y="311" width="2" height="1" fill="#5a5a5a"/><rect x="37" y="314" width="2" height="1" fill="#5a5a5a"/><rect x="37" y="317" width="2" height="1" fill="#5a5a5a"/><rect x="35" y="320" width="4" height="1" fill="#5a5a5a"/><rect x="37" y="323" width="2" height="1" fill="#5a5a5a"/><rect x="37" y="326" width="2" height="1" fill="#5a5a5a"/><rect x="37" y="329" width="2" height="1" fill="#5a5a5a"/><rect x="28" y="332" width="11" height="1" fill="#6a6a6a"/><text x="30.5" y="339.0" font-size="6" fill="#666666" font-family="Liberation Sans">1</text><text x="30.5" y="344.3" font-size="6" fill="#666666" font-family="Liberation Sans">2</text><text x="30.5" y="349.6" font-size="6" fill="#666666" font-family="Liberation Sans">0</text><text x="30.5" y="354.9" font-size="6" fill="#666666" font-family="Liberation Sans">0</text><rect x="37" y="336" width="2" height="1" fill="#5a5a5a"/><rect x="37" y="339" width="2" height="1" fill="#5a5a5a"/><rect x="37" y="342" width="2" height="1" fill="#5a5a5a"/><rect x="35" y="345" width="4" height="1" fill="#5a5a5a"/><rect x="37" y="348" width="2" height="1" fill="#5a5a5a"/><rect x="37" y="351" width="2" height="1" fill="#5a5a5a"/><rect x="37" y="354" width="2" height="1" fill="#5a5a5a"/><rect x="28" y="357" width="11" height="1" fill="#6a6a6a"/><text x="30.5" y="364.0" font-size="6" fill="#666666" font-family="Liberation Sans">1</text><text x="30.5" y="369.3" font-size="6" fill="#666666" font-family="Liberation Sans">4</text><text x="30.5" y="374.6" font-size="6" fill="#666666" font-family="Liberation Sans">0</text><text x="30.5" y="379.9" font-size="6" fill="#666666" font-family="Liberation Sans">0</text><rect x="37" y="360" width="2" height="1" fill="#5a5a5a"/><rect x="37" y="363" width="2" height="1" fill="#5a5a5a"/><rect x="37" y="366" width="2" height="1" fill="#5a5a5a"/><rect x="35" y="369" width="4" height="1" fill="#5a5a5a"/><rect x="37" y="373" width="2" height="1" fill="#5a5a5a"/><rect x="37" y="376" width="2" height="1" fill="#5a5a5a"/><rect x="37" y="379" width="2" height="1" fill="#5a5a5a"/><rect x="28" y="382" width="11" height="1" fill="#6a6a6a"/><text x="30.5" y="389.0" font-size="6" fill="#666666" font-family="Liberation Sans">1</text><text x="30.5" y="394.3" font-size="6" fill="#666666" font-family="Liberation Sans">6</text><text x="30.5" y="399.6" font-size="6" fill="#666666" font-family="Liberation Sans">0</text><text x="30.5" y="404.9" font-size="6" fill="#666666" font-family="Liberation Sans">0</text><rect x="37" y="385" width="2" height="1" fill="#5a5a5a"/><rect x="37" y="388" width="2" height="1" fill="#5a5a5a"/><rect x="37" y="391" width="2" height="1" fill="#5a5a5a"/><rect x="35" y="394" width="4" height="1" fill="#5a5a5a"/><rect x="37" y="397" width="2" height="1" fill="#5a5a5a"/><rect x="37" y="400" width="2" height="1" fill="#5a5a5a"/><rect x="37" y="403" width="2" height="1" fill="#5a5a5a"/><rect x="28" y="406" width="11" height="1" fill="#6a6a6a"/><text x="30.5" y="413.0" font-size="6" fill="#666666" font-family="Liberation Sans">1</text><text x="30.5" y="418.3" font-size="6" fill="#666666" font-family="Liberation Sans">8</text><text x="30.5" y="423.6" font-size="6" fill="#666666" font-family="Liberation Sans">0</text><text x="30.5" y="428.9" font-size="6" fill="#666666" font-family="Liberation Sans">0</text><rect x="37" y="410" width="2" height="1" fill="#5a5a5a"/><rect x="37" y="413" width="2" height="1" fill="#5a5a5a"/><rect x="37" y="416" width="2" height="1" fill="#5a5a5a"/><rect x="35" y="419" width="4" height="1" fill="#5a5a5a"/><rect x="37" y="422" width="2" height="1" fill="#5a5a5a"/><rect x="37" y="425" width="2" height="1" fill="#5a5a5a"/><rect x="37" y="428" width="2" height="1" fill="#5a5a5a"/><rect x="28" y="431" width="11" height="1" fill="#6a6a6a"/><text x="30.5" y="438.0" font-size="6" fill="#666666" font-family="Liberation Sans">2</text><text x="30.5" y="443.3" font-size="6" fill="#666666" font-family="Liberation Sans">0</text><text x="30.5" y="448.6" font-size="6" fill="#666666" font-family="Liberation Sans">0</text><text x="30.5" y="453.9" font-size="6" fill="#666666" font-family="Liberation Sans">0</text><rect x="37" y="434" width="2" height="1" fill="#5a5a5a"/><rect x="37" y="437" width="2" height="1" fill="#5a5a5a"/><rect x="37" y="440" width="2" height="1" fill="#5a5a5a"/><rect x="35" y="443" width="4" height="1" fill="#5a5a5a"/><rect x="37" y="447" width="2" height="1" fill="#5a5a5a"/><rect x="37" y="450" width="2" height="1" fill="#5a5a5a"/><rect x="37" y="453" width="2" height="1" fill="#5a5a5a"/><rect x="28" y="456" width="11" height="1" fill="#6a6a6a"/><text x="30.5" y="463.0" font-size="6" fill="#666666" font-family="Liberation Sans">2</text><text x="30.5" y="468.3" font-size="6" fill="#666666" font-family="Liberation Sans">2</text><text x="30.5" y="473.6" font-size="6" fill="#666666" font-family="Liberation Sans">0</text><text x="30.5" y="478.9" font-size="6" fill="#666666" font-family="Liberation Sans">0</text><rect x="37" y="459" width="2" height="1" fill="#5a5a5a"/><rect x="37" y="462" width="2" height="1" fill="#5a5a5a"/><rect x="37" y="465" width="2" height="1" fill="#5a5a5a"/><rect x="35" y="468" width="4" height="1" fill="#5a5a5a"/><rect x="37" y="471" width="2" height="1" fill="#5a5a5a"/><rect x="37" y="474" width="2" height="1" fill="#5a5a5a"/><rect x="37" y="477" width="2" height="1" fill="#5a5a5a"/><rect x="28" y="480" width="11" height="1" fill="#6a6a6a"/><text x="30.5" y="487.0" font-size="6" fill="#666666" font-family="Liberation Sans">2</text><text x="30.5" y="492.3" font-size="6" fill="#666666" font-family="Liberation Sans">4</text><text x="30.5" y="497.6" font-size="6" fill="#666666" font-family="Liberation Sans">0</text><text x="30.5" y="502.9" font-size="6" fill="#666666" font-family="Liberation Sans">0</text><rect x="37" y="484" width="2" height="1" fill="#5a5a5a"/><rect x="37" y="487" width="2" height="1" fill="#5a5a5a"/><rect x="37" y="490" width="2" height="1" fill="#5a5a5a"/><rect x="35" y="493" width="4" height="1" fill="#5a5a5a"/><rect x="37" y="496" width="2" height="1" fill="#5a5a5a"/><rect x="37" y="499" width="2" height="1" fill="#5a5a5a"/><rect x="37" y="502" width="2" height="1" fill="#5a5a5a"/><rect x="28" y="505" width="11" height="1" fill="#6a6a6a"/><text x="30.5" y="512.0" font-size="6" fill="#666666" font-family="Liberation Sans">2</text><text x="30.5" y="517.3" font-size="6" fill="#666666" font-family="Liberation Sans">6</text><text x="30.5" y="522.6" font-size="6" fill="#666666" font-family="Liberation Sans">0</text><text x="30.5" y="527.9" font-size="6" fill="#666666" font-family="Liberation Sans">0</text><rect x="37" y="508" width="2" height="1" fill="#5a5a5a"/><rect x="37" y="511" width="2" height="1" fill="#5a5a5a"/><rect x="37" y="514" width="2" height="1" fill="#5a5a5a"/><rect x="35" y="517" width="4" height="1" fill="#5a5a5a"/><rect x="37" y="520" width="2" height="1" fill="#5a5a5a"/><rect x="37" y="524" width="2" height="1" fill="#5a5a5a"/><rect x="37" y="527" width="2" height="1" fill="#5a5a5a"/><rect x="28" y="530" width="11" height="1" fill="#6a6a6a"/><text x="30.5" y="537.0" font-size="6" fill="#666666" font-family="Liberation Sans">2</text><text x="30.5" y="542.3" font-size="6" fill="#666666" font-family="Liberation Sans">8</text><text x="30.5" y="547.6" font-size="6" fill="#666666" font-family="Liberation Sans">0</text><text x="30.5" y="552.9" font-size="6" fill="#666666" font-family="Liberation Sans">0</text><rect x="37" y="533" width="2" height="1" fill="#5a5a5a"/><rect x="37" y="536" width="2" height="1" fill="#5a5a5a"/><rect x="37" y="539" width="2" height="1" fill="#5a5a5a"/><rect x="35" y="542" width="4" height="1" fill="#5a5a5a"/><rect x="37" y="545" width="2" height="1" fill="#5a5a5a"/><rect x="37" y="548" width="2" height="1" fill="#5a5a5a"/><rect x="37" y="551" width="2" height="1" fill="#5a5a5a"/><rect x="28" y="554" width="11" height="1" fill="#6a6a6a"/><text x="30.5" y="561.0" font-size="6" fill="#666666" font-family="Liberation Sans">3</text><text x="30.5" y="566.3" font-size="6" fill="#666666" font-family="Liberation Sans">0</text><text x="30.5" y="571.6" font-size="6" fill="#666666" font-family="Liberation Sans">0</text><text x="30.5" y="576.9" font-size="6" fill="#666666" font-family="Liberation Sans">0</text><rect x="37" y="557" width="2" height="1" fill="#5a5a5a"/><rect x="37" y="561" width="2" height="1" fill="#5a5a5a"/><rect x="37" y="564" width="2" height="1" fill="#5a5a5a"/><rect x="35" y="567" width="4" height="1" fill="#5a5a5a"/><rect x="37" y="570" width="2" height="1" fill="#5a5a5a"/><rect x="37" y="573" width="2" height="1" fill="#5a5a5a"/><rect x="37" y="576" width="2" height="1" fill="#5a5a5a"/><rect x="28" y="579" width="11" height="1" fill="#6a6a6a"/><text x="30.5" y="586.0" font-size="6" fill="#666666" font-family="Liberation Sans">3</text><text x="30.5" y="591.3" font-size="6" fill="#666666" font-family="Liberation Sans">2</text><text x="30.5" y="596.6" font-size="6" fill="#666666" font-family="Liberation Sans">0</text><text x="30.5" y="601.9" font-size="6" fill="#666666" font-family="Liberation Sans">0</text><rect x="37" y="582" width="2" height="1" fill="#5a5a5a"/><rect x="37" y="585" width="2" height="1" fill="#5a5a5a"/><rect x="37" y="588" width="2" height="1" fill="#5a5a5a"/><rect x="35" y="591" width="4" height="1" fill="#5a5a5a"/><rect x="37" y="594" width="2" height="1" fill="#5a5a5a"/><rect x="37" y="598" width="2" height="1" fill="#5a5a5a"/><rect x="37" y="601" width="2" height="1" fill="#5a5a5a"/><rect x="28" y="604" width="11" height="1" fill="#6a6a6a"/><text x="30.5" y="611.0" font-size="6" fill="#666666" font-family="Liberation Sans">3</text><text x="30.5" y="616.3" font-size="6" fill="#666666" font-family="Liberation Sans">4</text><text x="30.5" y="621.6" font-size="6" fill="#666666" font-family="Liberation Sans">0</text><text x="30.5" y="626.9" font-size="6" fill="#666666" font-family="Liberation Sans">0</text><rect x="37" y="607" width="2" height="1" fill="#5a5a5a"/><rect x="37" y="610" width="2" height="1" fill="#5a5a5a"/><rect x="37" y="613" width="2" height="1" fill="#5a5a5a"/><rect x="35" y="616" width="4" height="1" fill="#5a5a5a"/><rect x="37" y="619" width="2" height="1" fill="#5a5a5a"/><rect x="37" y="622" width="2" height="1" fill="#5a5a5a"/></svg>
<div style="position:absolute;left:39px;top:69px;width:514px;height:556px;background:#1c1c1c;"></div>
<svg style="position:absolute;left:39px;top:185px;" width="490" height="330" viewBox="0 0 490 330"><defs><filter id="b05" x="-50%" y="-50%" width="200%" height="200%"><feGaussianBlur stdDeviation="0.6"/></filter><filter id="b1" x="-50%" y="-50%" width="200%" height="200%"><feGaussianBlur stdDeviation="1.2"/></filter><filter id="b2" x="-50%" y="-50%" width="200%" height="200%"><feGaussianBlur stdDeviation="2.5"/></filter><filter id="b3" x="-50%" y="-50%" width="200%" height="200%"><feGaussianBlur stdDeviation="3.5"/></filter><filter id="b4" x="-50%" y="-50%" width="200%" height="200%"><feGaussianBlur stdDeviation="4.5"/></filter><clipPath id="pc"><rect x="0" y="0" width="490" height="330"/></clipPath><linearGradient id="lotusband" x1="0" x2="0" y1="0" y2="1"><stop offset="0" stop-color="#c7c6b4"/><stop offset="0.46" stop-color="#c7c6b4"/><stop offset="0.6" stop-color="#c0c6b0"/><stop offset="0.85" stop-color="#bdc5ad"/><stop offset="0.92" stop-color="#c9c9b8"/><stop offset="1" stop-color="#cbcaba"/></linearGradient></defs><g clip-path="url(#pc)"><rect x="0" y="0" width="490" height="330" fill="url(#lotusband)"/><rect x="283" y="0" width="126" height="330" fill="#b8c1a7"/><ellipse cx="35" cy="240" rx="45" ry="70" fill="#b9c4a6" opacity="0.55" filter="url(#b4)"/><ellipse cx="120" cy="235" rx="50" ry="75" fill="#b9c4a6" opacity="0.55" filter="url(#b4)"/><ellipse cx="225" cy="230" rx="55" ry="75" fill="#b9c4a6" opacity="0.55" filter="url(#b4)"/><ellipse cx="450" cy="230" rx="45" ry="75" fill="#b9c4a6" opacity="0.55" filter="url(#b4)"/><polygon points="20,182 57,200 62,232 40,236 22,215" fill="#a3bd93" opacity="0.95" filter="url(#b3)"/><polygon points="23,245 55,250 66,292 42,294 26,270" fill="#a3bd93" opacity="0.95" filter="url(#b3)"/><polygon points="0,219 20,222 20,242 0,244" fill="#a6bf98" opacity="0.95" filter="url(#b3)"/><polygon points="0,272 23,275 22,299 0,300" fill="#a6bf98" opacity="0.95" filter="url(#b3)"/><polygon points="117,167 161,163 163,196 130,197 118,185" fill="#a5bd96" opacity="0.95" filter="url(#b3)"/><polygon points="74,222 100,224 98,245 74,246" fill="#a3bc94" opacity="0.95" filter="url(#b3)"/><polygon points="124,236 162,232 163,300 130,298 124,270" fill="#a1bb93" opacity="0.95" filter="url(#b3)"/><polygon points="74,279 97,281 96,297 74,298" fill="#a6be98" opacity="0.95" filter="url(#b3)"/><polygon points="177,176 231,178 232,219 186,220 176,200" fill="#a4bd95" opacity="0.95" filter="url(#b3)"/><polygon points="187,225 218,226 218,252 188,252" fill="#9fba92" opacity="0.95" filter="url(#b3)"/><polygon points="218,252 262,250 279,280 222,280" fill="#a3bc95" opacity="0.95" filter="url(#b3)"/><polygon points="228,178 252,178 250,205 230,205" fill="#a9bf9b" opacity="0.95" filter="url(#b3)"/><polygon points="238,294 279,292 279,322 240,320" fill="#a0ba93" opacity="0.95" filter="url(#b3)"/><polygon points="413,165 490,162 490,225 440,226 413,215" fill="#a3bc94" opacity="0.95" filter="url(#b3)"/><polygon points="459,168 487,168 487,193 462,193" fill="#95b389" opacity="0.95" filter="url(#b3)"/><polygon points="416,253 445,253 446,295 418,295" fill="#a1bb93" opacity="0.95" filter="url(#b3)"/><polygon points="465,270 490,270 490,295 466,295" fill="#a1bb93" opacity="0.95" filter="url(#b3)"/><polygon points="27,188 36,190 56,226 48,229" fill="#7fa580" opacity="0.8" filter="url(#b2)"/><path d="M33.9 210.3l3.4 7.9" stroke="#6a9a78" stroke-width="1.5" opacity="0.22" filter="url(#b05)"/><path d="M45.1 190.7l10.0 0.4" stroke="#6a9a78" stroke-width="1.5" opacity="0.22" filter="url(#b05)"/><path d="M34.5 197.6l-7.8 0.1" stroke="#6a9a78" stroke-width="1.5" opacity="0.22" filter="url(#b05)"/><path d="M51.3 207.5l-2.5 5.3" stroke="#6a9a78" stroke-width="1.5" opacity="0.22" filter="url(#b05)"/><path d="M45.4 223.6l-0.7 9.4" stroke="#6a9a78" stroke-width="1.5" opacity="0.22" filter="url(#b05)"/><polygon points="30,249 38,250 58,286 50,288" fill="#7fa580" opacity="0.8" filter="url(#b2)"/><path d="M48.8 251.5l-6.2 5.9" stroke="#6a9a78" stroke-width="1.5" opacity="0.22" filter="url(#b05)"/><path d="M38.4 250.2l-7.1 3.2" stroke="#6a9a78" stroke-width="1.5" opacity="0.22" filter="url(#b05)"/><path d="M50.1 283.3l-6.6 8.2" stroke="#6a9a78" stroke-width="1.5" opacity="0.22" filter="url(#b05)"/><path d="M41.1 280.2l1.8 10.5" stroke="#6a9a78" stroke-width="1.5" opacity="0.22" filter="url(#b05)"/><path d="M54.6 252.8l5.7 2.6" stroke="#6a9a78" stroke-width="1.5" opacity="0.22" filter="url(#b05)"/><polygon points="127,174 150,172 152,186 130,188" fill="#7fa580" opacity="0.8" filter="url(#b2)"/><path d="M151.1 179.0l-2.6 6.3" stroke="#6a9a78" stroke-width="1.5" opacity="0.22" filter="url(#b05)"/><path d="M139.7 178.2l3.8 7.6" stroke="#6a9a78" stroke-width="1.5" opacity="0.22" filter="url(#b05)"/><path d="M141.6 186.5l-5.7 8.9" stroke="#6a9a78" stroke-width="1.5" opacity="0.22" filter="url(#b05)"/><path d="M148.4 187.9l-3.1 5.1" stroke="#6a9a78" stroke-width="1.5" opacity="0.22" filter="url(#b05)"/><path d="M148.5 187.4l-8.0 2.5" stroke="#6a9a78" stroke-width="1.5" opacity="0.22" filter="url(#b05)"/><polygon points="76,228 92,230 90,240 77,241" fill="#7fa580" opacity="0.8" filter="url(#b2)"/><path d="M87.4 230.7l-7.3 4.3" stroke="#6a9a78" stroke-width="1.5" opacity="0.22" filter="url(#b05)"/><path d="M80.6 228.8l-9.8 4.8" stroke="#6a9a78" stroke-width="1.5" opacity="0.22" filter="url(#b05)"/><path d="M77.4 238.4l1.6 5.7" stroke="#6a9a78" stroke-width="1.5" opacity="0.22" filter="url(#b05)"/><path d="M80.7 238.0l-4.9 2.0" stroke="#6a9a78" stroke-width="1.5" opacity="0.22" filter="url(#b05)"/><path d="M85.8 228.6l-4.4 5.4" stroke="#6a9a78" stroke-width="1.5" opacity="0.22" filter="url(#b05)"/><polygon points="140,262 163,258 163,294 144,292" fill="#7fa580" opacity="0.8" filter="url(#b2)"/><path d="M160.3 293.3l-0.2 11.0" stroke="#6a9a78" stroke-width="1.5" opacity="0.22" filter="url(#b05)"/><path d="M147.1 260.8l-1.6 4.9" stroke="#6a9a78" stroke-width="1.5" opacity="0.22" filter="url(#b05)"/><path d="M144.5 272.7l-2.0 5.6" stroke="#6a9a78" stroke-width="1.5" opacity="0.22" filter="url(#b05)"/><path d="M141.0 289.2l5.9 9.0" stroke="#6a9a78" stroke-width="1.5" opacity="0.22" filter="url(#b05)"/><path d="M160.6 271.6l1.0 8.1" stroke="#6a9a78" stroke-width="1.5" opacity="0.22" filter="url(#b05)"/><polygon points="194,185 221,192 220,212 196,208" fill="#7fa580" opacity="0.8" filter="url(#b2)"/><path d="M211.4 201.1l-1.6 8.6" stroke="#6a9a78" stroke-width="1.5" opacity="0.22" filter="url(#b05)"/><path d="M219.4 198.7l2.0 9.1" stroke="#6a9a78" stroke-width="1.5" opacity="0.22" filter="url(#b05)"/><path d="M200.4 193.1l-8.1 0.6" stroke="#6a9a78" stroke-width="1.5" opacity="0.22" filter="url(#b05)"/><path d="M208.8 185.3l2.2 8.2" stroke="#6a9a78" stroke-width="1.5" opacity="0.22" filter="url(#b05)"/><path d="M194.5 201.6l-2.2 4.9" stroke="#6a9a78" stroke-width="1.5" opacity="0.22" filter="url(#b05)"/><polygon points="192,232 214,234 212,250 194,248" fill="#7fa580" opacity="0.8" filter="url(#b2)"/><path d="M205.8 240.4l-3.8 6.0" stroke="#6a9a78" stroke-width="1.5" opacity="0.22" filter="url(#b05)"/><path d="M207.6 245.3l5.4 0.4" stroke="#6a9a78" stroke-width="1.5" opacity="0.22" filter="url(#b05)"/><path d="M206.9 249.3l5.5 5.5" stroke="#6a9a78" stroke-width="1.5" opacity="0.22" filter="url(#b05)"/><path d="M205.0 237.8l2.9 6.3" stroke="#6a9a78" stroke-width="1.5" opacity="0.22" filter="url(#b05)"/><path d="M200.1 242.7l4.3 5.9" stroke="#6a9a78" stroke-width="1.5" opacity="0.22" filter="url(#b05)"/><polygon points="230,260 262,258 270,276 234,276" fill="#7fa580" opacity="0.8" filter="url(#b2)"/><path d="M260.9 258.5l-2.0 9.2" stroke="#6a9a78" stroke-width="1.5" opacity="0.22" filter="url(#b05)"/><path d="M242.4 262.0l-5.2 3.7" stroke="#6a9a78" stroke-width="1.5" opacity="0.22" filter="url(#b05)"/><path d="M237.5 265.8l-3.3 4.6" stroke="#6a9a78" stroke-width="1.5" opacity="0.22" filter="url(#b05)"/><path d="M242.9 264.0l-6.6 3.8" stroke="#6a9a78" stroke-width="1.5" opacity="0.22" filter="url(#b05)"/><path d="M264.2 261.0l4.4 7.8" stroke="#6a9a78" stroke-width="1.5" opacity="0.22" filter="url(#b05)"/><polygon points="245,300 275,300 276,316 248,314" fill="#7fa580" opacity="0.8" filter="url(#b2)"/><path d="M272.4 307.2l4.4 3.7" stroke="#6a9a78" stroke-width="1.5" opacity="0.22" filter="url(#b05)"/><path d="M261.4 303.1l-8.2 5.7" stroke="#6a9a78" stroke-width="1.5" opacity="0.22" filter="url(#b05)"/><path d="M250.7 304.5l-7.3 5.0" stroke="#6a9a78" stroke-width="1.5" opacity="0.22" filter="url(#b05)"/><path d="M270.0 305.5l6.2 2.7" stroke="#6a9a78" stroke-width="1.5" opacity="0.22" filter="url(#b05)"/><path d="M269.6 304.3l3.5 6.6" stroke="#6a9a78" stroke-width="1.5" opacity="0.22" filter="url(#b05)"/><polygon points="416,190 432,190 430,218 416,216" fill="#7fa580" opacity="0.8" filter="url(#b2)"/><path d="M422.7 201.5l-5.8 1.5" stroke="#6a9a78" stroke-width="1.5" opacity="0.22" filter="url(#b05)"/><path d="M416.1 216.4l-10.2 4.0" stroke="#6a9a78" stroke-width="1.5" opacity="0.22" filter="url(#b05)"/><path d="M422.9 216.6l-6.2 1.4" stroke="#6a9a78" stroke-width="1.5" opacity="0.22" filter="url(#b05)"/><path d="M427.9 213.4l-4.0 7.1" stroke="#6a9a78" stroke-width="1.5" opacity="0.22" filter="url(#b05)"/><path d="M420.6 199.5l4.1 3.5" stroke="#6a9a78" stroke-width="1.5" opacity="0.22" filter="url(#b05)"/><polygon points="463,172 485,174 484,190 466,190" fill="#7fa580" opacity="0.8" filter="url(#b2)"/><path d="M476.0 177.2l-4.4 3.0" stroke="#6a9a78" stroke-width="1.5" opacity="0.22" filter="url(#b05)"/><path d="M482.9 184.5l-10.1 2.5" stroke="#6a9a78" stroke-width="1.5" opacity="0.22" filter="url(#b05)"/><path d="M482.8 182.4l9.5 0.4" stroke="#6a9a78" stroke-width="1.5" opacity="0.22" filter="url(#b05)"/><path d="M466.8 177.4l-4.0 7.1" stroke="#6a9a78" stroke-width="1.5" opacity="0.22" filter="url(#b05)"/><path d="M472.1 188.9l-2.4 6.6" stroke="#6a9a78" stroke-width="1.5" opacity="0.22" filter="url(#b05)"/><polygon points="420,262 440,262 440,290 422,290" fill="#7fa580" opacity="0.8" filter="url(#b2)"/><path d="M425.0 286.1l0.7 9.7" stroke="#6a9a78" stroke-width="1.5" opacity="0.22" filter="url(#b05)"/><path d="M427.0 267.5l-1.1 9.8" stroke="#6a9a78" stroke-width="1.5" opacity="0.22" filter="url(#b05)"/><path d="M423.4 284.2l-9.5 2.4" stroke="#6a9a78" stroke-width="1.5" opacity="0.22" filter="url(#b05)"/><path d="M436.5 262.2l-4.0 9.4" stroke="#6a9a78" stroke-width="1.5" opacity="0.22" filter="url(#b05)"/><path d="M421.0 269.6l5.4 6.1" stroke="#6a9a78" stroke-width="1.5" opacity="0.22" filter="url(#b05)"/><polygon points="468,276 488,276 488,292 470,292" fill="#7fa580" opacity="0.8" filter="url(#b2)"/><path d="M476.5 283.6l-3.8 3.2" stroke="#6a9a78" stroke-width="1.5" opacity="0.22" filter="url(#b05)"/><path d="M469.1 278.0l5.0 2.1" stroke="#6a9a78" stroke-width="1.5" opacity="0.22" filter="url(#b05)"/><path d="M487.5 289.7l7.7 2.1" stroke="#6a9a78" stroke-width="1.5" opacity="0.22" filter="url(#b05)"/><path d="M474.3 281.0l4.0 7.9" stroke="#6a9a78" stroke-width="1.5" opacity="0.22" filter="url(#b05)"/><path d="M479.7 281.8l5.8 3.9" stroke="#6a9a78" stroke-width="1.5" opacity="0.22" filter="url(#b05)"/><ellipse cx="20" cy="175" rx="13" ry="9" fill="#d2d6cc" opacity="0.9" filter="url(#b1)"/><path d="M12.3 165.7Q17.4 174.7 12.3 180.4Q7.3 174.7 12.3 165.7Z" transform="rotate(-27 12.3 177.0)" fill="#e0e3dc" stroke="#b4b9ae" stroke-width="0.6" opacity="0.9" filter="url(#b05)"/><path d="M17.6 168.2Q22.7 175.6 17.6 180.2Q12.6 175.6 17.6 168.2Z" transform="rotate(-6 17.6 177.4)" fill="#e0e3dc" stroke="#b4b9ae" stroke-width="0.6" opacity="0.9" filter="url(#b05)"/><path d="M21.5 168.3Q26.6 175.7 21.5 180.3Q16.4 175.7 21.5 168.3Z" transform="rotate(-2 21.5 177.6)" fill="#e0e3dc" stroke="#b4b9ae" stroke-width="0.6" opacity="0.9" filter="url(#b05)"/><path d="M27.2 168.9Q32.2 176.5 27.2 181.2Q22.1 176.5 27.2 168.9Z" transform="rotate(13 27.2 178.4)" fill="#e0e3dc" stroke="#b4b9ae" stroke-width="0.6" opacity="0.9" filter="url(#b05)"/><ellipse cx="5" cy="208" rx="7" ry="9" fill="#d2d6cc" opacity="0.9" filter="url(#b1)"/><path d="M1.8 200.5Q5.4 209.4 1.8 214.9Q-1.9 209.4 1.8 200.5Z" transform="rotate(-19 1.8 211.6)" fill="#e0e3dc" stroke="#b4b9ae" stroke-width="0.6" opacity="0.9" filter="url(#b05)"/><path d="M6.0 197.7Q9.6 207.4 6.0 213.4Q2.3 207.4 6.0 197.7Z" transform="rotate(-4 6.0 209.8)" fill="#e0e3dc" stroke="#b4b9ae" stroke-width="0.6" opacity="0.9" filter="url(#b05)"/><path d="M7.8 199.8Q11.4 207.9 7.8 213.0Q4.1 207.9 7.8 199.8Z" transform="rotate(23 7.8 209.9)" fill="#e0e3dc" stroke="#b4b9ae" stroke-width="0.6" opacity="0.9" filter="url(#b05)"/><ellipse cx="6" cy="260" rx="8" ry="9" fill="#d2d6cc" opacity="0.9" filter="url(#b1)"/><path d="M1.4 251.6Q5.5 260.6 1.4 266.3Q-2.8 260.6 1.4 251.6Z" transform="rotate(-19 1.4 262.9)" fill="#e0e3dc" stroke="#b4b9ae" stroke-width="0.6" opacity="0.9" filter="url(#b05)"/><path d="M6.1 252.6Q10.3 260.0 6.1 264.6Q1.9 260.0 6.1 252.6Z" transform="rotate(-6 6.1 261.8)" fill="#e0e3dc" stroke="#b4b9ae" stroke-width="0.6" opacity="0.9" filter="url(#b05)"/><path d="M10.4 252.4Q14.5 260.5 10.4 265.6Q6.2 260.5 10.4 252.4Z" transform="rotate(18 10.4 262.6)" fill="#e0e3dc" stroke="#b4b9ae" stroke-width="0.6" opacity="0.9" filter="url(#b05)"/><ellipse cx="91" cy="199" rx="12" ry="10" fill="#d2d6cc" opacity="0.9" filter="url(#b1)"/><path d="M84.2 188.4Q88.8 199.0 84.2 205.6Q79.5 199.0 84.2 188.4Z" transform="rotate(-15 84.2 201.6)" fill="#e0e3dc" stroke="#b4b9ae" stroke-width="0.6" opacity="0.9" filter="url(#b05)"/><path d="M88.2 190.0Q92.9 199.7 88.2 205.8Q83.6 199.7 88.2 190.0Z" transform="rotate(1 88.2 202.1)" fill="#e0e3dc" stroke="#b4b9ae" stroke-width="0.6" opacity="0.9" filter="url(#b05)"/><path d="M93.7 187.7Q98.4 198.8 93.7 205.8Q89.0 198.8 93.7 187.7Z" transform="rotate(-1 93.7 201.6)" fill="#e0e3dc" stroke="#b4b9ae" stroke-width="0.6" opacity="0.9" filter="url(#b05)"/><path d="M97.6 191.9Q102.3 200.4 97.6 205.7Q92.9 200.4 97.6 191.9Z" transform="rotate(19 97.6 202.5)" fill="#e0e3dc" stroke="#b4b9ae" stroke-width="0.6" opacity="0.9" filter="url(#b05)"/><ellipse cx="102" cy="218" rx="12" ry="10" fill="#d2d6cc" opacity="0.9" filter="url(#b1)"/><path d="M94.3 208.3Q99.0 218.7 94.3 225.3Q89.6 218.7 94.3 208.3Z" transform="rotate(-17 94.3 221.3)" fill="#e0e3dc" stroke="#b4b9ae" stroke-width="0.6" opacity="0.9" filter="url(#b05)"/><path d="M100.5 207.8Q105.2 218.1 100.5 224.5Q95.8 218.1 100.5 207.8Z" transform="rotate(-4 100.5 220.6)" fill="#e0e3dc" stroke="#b4b9ae" stroke-width="0.6" opacity="0.9" filter="url(#b05)"/><path d="M104.4 207.6Q109.1 218.2 104.4 224.9Q99.7 218.2 104.4 207.6Z" transform="rotate(15 104.4 220.9)" fill="#e0e3dc" stroke="#b4b9ae" stroke-width="0.6" opacity="0.9" filter="url(#b05)"/><path d="M108.7 211.1Q113.4 219.3 108.7 224.4Q104.0 219.3 108.7 211.1Z" transform="rotate(23 108.7 221.3)" fill="#e0e3dc" stroke="#b4b9ae" stroke-width="0.6" opacity="0.9" filter="url(#b05)"/><ellipse cx="148" cy="224" rx="11" ry="12" fill="#d2d6cc" opacity="0.9" filter="url(#b1)"/><path d="M142.8 212.6Q148.5 225.4 142.8 233.4Q137.1 225.4 142.8 212.6Z" transform="rotate(-21 142.8 228.6)" fill="#e0e3dc" stroke="#b4b9ae" stroke-width="0.6" opacity="0.9" filter="url(#b05)"/><path d="M147.8 215.8Q153.5 225.5 147.8 231.6Q142.1 225.5 147.8 215.8Z" transform="rotate(-1 147.8 227.9)" fill="#e0e3dc" stroke="#b4b9ae" stroke-width="0.6" opacity="0.9" filter="url(#b05)"/><path d="M152.8 214.6Q158.6 224.4 152.8 230.5Q147.1 224.4 152.8 214.6Z" transform="rotate(22 152.8 226.8)" fill="#e0e3dc" stroke="#b4b9ae" stroke-width="0.6" opacity="0.9" filter="url(#b05)"/><ellipse cx="88" cy="253" rx="10" ry="8" fill="#d2d6cc" opacity="0.9" filter="url(#b1)"/><path d="M82.3 245.6Q87.5 253.0 82.3 257.7Q77.1 253.0 82.3 245.6Z" transform="rotate(-9 82.3 254.9)" fill="#e0e3dc" stroke="#b4b9ae" stroke-width="0.6" opacity="0.9" filter="url(#b05)"/><path d="M87.2 245.5Q92.4 253.3 87.2 258.2Q82.0 253.3 87.2 245.5Z" transform="rotate(8 87.2 255.3)" fill="#e0e3dc" stroke="#b4b9ae" stroke-width="0.6" opacity="0.9" filter="url(#b05)"/><path d="M93.6 247.2Q98.8 254.3 93.6 258.8Q88.4 254.3 93.6 247.2Z" transform="rotate(15 93.6 256.1)" fill="#e0e3dc" stroke="#b4b9ae" stroke-width="0.6" opacity="0.9" filter="url(#b05)"/><ellipse cx="102" cy="273" rx="12" ry="10" fill="#d2d6cc" opacity="0.9" filter="url(#b1)"/><path d="M95.0 262.9Q99.6 274.0 95.0 280.9Q90.3 274.0 95.0 262.9Z" transform="rotate(-26 95.0 276.8)" fill="#e0e3dc" stroke="#b4b9ae" stroke-width="0.6" opacity="0.9" filter="url(#b05)"/><path d="M99.1 264.5Q103.8 273.3 99.1 278.7Q94.4 273.3 99.1 264.5Z" transform="rotate(-7 99.1 275.5)" fill="#e0e3dc" stroke="#b4b9ae" stroke-width="0.6" opacity="0.9" filter="url(#b05)"/><path d="M104.4 265.5Q109.1 273.5 104.4 278.5Q99.7 273.5 104.4 265.5Z" transform="rotate(5 104.4 275.5)" fill="#e0e3dc" stroke="#b4b9ae" stroke-width="0.6" opacity="0.9" filter="url(#b05)"/><path d="M108.5 262.3Q113.2 273.4 108.5 280.3Q103.8 273.4 108.5 262.3Z" transform="rotate(23 108.5 276.1)" fill="#e0e3dc" stroke="#b4b9ae" stroke-width="0.6" opacity="0.9" filter="url(#b05)"/><ellipse cx="203" cy="162" rx="14" ry="7" fill="#d2d6cc" opacity="0.9" filter="url(#b1)"/><path d="M195.2 155.4Q200.6 162.6 195.2 167.0Q189.7 162.6 195.2 155.4Z" transform="rotate(-28 195.2 164.3)" fill="#e0e3dc" stroke="#b4b9ae" stroke-width="0.6" opacity="0.9" filter="url(#b05)"/><path d="M201.2 155.2Q206.6 162.8 201.2 167.5Q195.7 162.8 201.2 155.2Z" transform="rotate(-0 201.2 164.7)" fill="#e0e3dc" stroke="#b4b9ae" stroke-width="0.6" opacity="0.9" filter="url(#b05)"/><path d="M205.4 156.6Q210.9 162.4 205.4 166.1Q199.9 162.4 205.4 156.6Z" transform="rotate(9 205.4 163.9)" fill="#e0e3dc" stroke="#b4b9ae" stroke-width="0.6" opacity="0.9" filter="url(#b05)"/><path d="M210.0 155.7Q215.5 161.7 210.0 165.5Q204.5 161.7 210.0 155.7Z" transform="rotate(12 210.0 163.2)" fill="#e0e3dc" stroke="#b4b9ae" stroke-width="0.6" opacity="0.9" filter="url(#b05)"/><ellipse cx="184" cy="207" rx="8" ry="8" fill="#d2d6cc" opacity="0.9" filter="url(#b1)"/><path d="M179.7 200.5Q183.8 206.9 179.7 210.9Q175.5 206.9 179.7 200.5Z" transform="rotate(-24 179.7 208.5)" fill="#e0e3dc" stroke="#b4b9ae" stroke-width="0.6" opacity="0.9" filter="url(#b05)"/><path d="M183.2 201.0Q187.4 207.5 183.2 211.6Q179.0 207.5 183.2 201.0Z" transform="rotate(7 183.2 209.1)" fill="#e0e3dc" stroke="#b4b9ae" stroke-width="0.6" opacity="0.9" filter="url(#b05)"/><path d="M188.2 199.9Q192.4 206.9 188.2 211.3Q184.1 206.9 188.2 199.9Z" transform="rotate(14 188.2 208.7)" fill="#e0e3dc" stroke="#b4b9ae" stroke-width="0.6" opacity="0.9" filter="url(#b05)"/><ellipse cx="236" cy="245" rx="10" ry="7" fill="#d2d6cc" opacity="0.9" filter="url(#b1)"/><path d="M230.7 237.0Q235.9 244.5 230.7 249.2Q225.5 244.5 230.7 237.0Z" transform="rotate(-7 230.7 246.3)" fill="#e0e3dc" stroke="#b4b9ae" stroke-width="0.6" opacity="0.9" filter="url(#b05)"/><path d="M235.9 239.8Q241.1 245.6 235.9 249.2Q230.7 245.6 235.9 239.8Z" transform="rotate(-8 235.9 247.1)" fill="#e0e3dc" stroke="#b4b9ae" stroke-width="0.6" opacity="0.9" filter="url(#b05)"/><path d="M240.7 237.3Q245.9 244.8 240.7 249.4Q235.5 244.8 240.7 237.3Z" transform="rotate(10 240.7 246.6)" fill="#e0e3dc" stroke="#b4b9ae" stroke-width="0.6" opacity="0.9" filter="url(#b05)"/><ellipse cx="252" cy="278" rx="4" ry="8" fill="#d2d6cc" opacity="0.9" filter="url(#b1)"/><path d="M249.0 271.6Q251.1 279.4 249.0 284.2Q247.0 279.4 249.0 271.6Z" transform="rotate(-24 249.0 281.3)" fill="#e0e3dc" stroke="#b4b9ae" stroke-width="0.6" opacity="0.9" filter="url(#b05)"/><path d="M252.1 269.8Q254.2 277.5 252.1 282.4Q250.0 277.5 252.1 269.8Z" transform="rotate(10 252.1 279.5)" fill="#e0e3dc" stroke="#b4b9ae" stroke-width="0.6" opacity="0.9" filter="url(#b05)"/><path d="M254.7 272.0Q256.8 279.0 254.7 283.4Q252.6 279.0 254.7 272.0Z" transform="rotate(14 254.7 280.8)" fill="#e0e3dc" stroke="#b4b9ae" stroke-width="0.6" opacity="0.9" filter="url(#b05)"/><ellipse cx="442" cy="168" rx="12" ry="12" fill="#d2d6cc" opacity="0.9" filter="url(#b1)"/><path d="M434.6 157.6Q439.3 169.2 434.6 176.5Q429.9 169.2 434.6 157.6Z" transform="rotate(-13 434.6 172.1)" fill="#e0e3dc" stroke="#b4b9ae" stroke-width="0.6" opacity="0.9" filter="url(#b05)"/><path d="M439.4 155.2Q444.1 167.9 439.4 175.8Q434.7 167.9 439.4 155.2Z" transform="rotate(3 439.4 171.0)" fill="#e0e3dc" stroke="#b4b9ae" stroke-width="0.6" opacity="0.9" filter="url(#b05)"/><path d="M445.0 156.3Q449.6 169.0 445.0 177.0Q440.3 169.0 445.0 156.3Z" transform="rotate(11 445.0 172.2)" fill="#e0e3dc" stroke="#b4b9ae" stroke-width="0.6" opacity="0.9" filter="url(#b05)"/><path d="M448.2 157.9Q452.9 168.9 448.2 175.7Q443.5 168.9 448.2 157.9Z" transform="rotate(9 448.2 171.6)" fill="#e0e3dc" stroke="#b4b9ae" stroke-width="0.6" opacity="0.9" filter="url(#b05)"/><ellipse cx="6" cy="165" rx="6" ry="6" fill="#d2d6cc" opacity="0.9" filter="url(#b1)"/><path d="M2.1 159.7Q5.2 165.0 2.1 168.3Q-1.1 165.0 2.1 159.7Z" transform="rotate(-13 2.1 166.4)" fill="#e0e3dc" stroke="#b4b9ae" stroke-width="0.6" opacity="0.9" filter="url(#b05)"/><path d="M6.9 158.4Q10.0 165.0 6.9 169.2Q3.8 165.0 6.9 158.4Z" transform="rotate(10 6.9 166.7)" fill="#e0e3dc" stroke="#b4b9ae" stroke-width="0.6" opacity="0.9" filter="url(#b05)"/><path d="M9.9 160.0Q13.0 165.2 9.9 168.5Q6.8 165.2 9.9 160.0Z" transform="rotate(11 9.9 166.5)" fill="#e0e3dc" stroke="#b4b9ae" stroke-width="0.6" opacity="0.9" filter="url(#b05)"/><ellipse cx="254" cy="124" rx="9" ry="8" fill="#d2d6cc" opacity="0.9" filter="url(#b1)"/><path d="M248.9 115.8Q253.6 123.8 248.9 128.8Q244.2 123.8 248.9 115.8Z" transform="rotate(-9 248.9 125.8)" fill="#e0e3dc" stroke="#b4b9ae" stroke-width="0.6" opacity="0.9" filter="url(#b05)"/><path d="M254.7 116.3Q259.4 124.3 254.7 129.4Q250.0 124.3 254.7 116.3Z" transform="rotate(6 254.7 126.4)" fill="#e0e3dc" stroke="#b4b9ae" stroke-width="0.6" opacity="0.9" filter="url(#b05)"/><path d="M257.7 115.8Q262.3 124.5 257.7 130.0Q253.0 124.5 257.7 115.8Z" transform="rotate(22 257.7 126.7)" fill="#e0e3dc" stroke="#b4b9ae" stroke-width="0.6" opacity="0.9" filter="url(#b05)"/><g filter="url(#b05)" fill="#e6e6e4"><path d="M462 212Q456 220 460 234Q458 246 466 254L472 256Q470 240 466 230Q464 220 465 213Z"/><path d="M473 230Q468 240 474 252L482 258Q482 246 477 236Z"/><path d="M438 264Q434 272 440 280Q446 290 462 292Q468 290 464 284Q454 278 444 280L441 268Z"/></g><path d="M98 308L106 312L112 318" stroke="#4a5240" stroke-width="1.6" fill="none" filter="url(#b05)"/><path d="M204 304L209 312L213 315" stroke="#4a5240" stroke-width="2" fill="none" filter="url(#b05)"/><path d="M244 298L250 305" stroke="#4a5240" stroke-width="2" fill="none" filter="url(#b05)"/><rect x="68" y="0" width="5" height="330" fill="#b8a07c"/><rect x="69" y="0" width="2" height="330" fill="#c6b08c"/><rect x="164" y="0" width="9" height="330" fill="#c09f74"/><rect x="166" y="0" width="4" height="330" fill="#cdb089"/><rect x="166" y="29" width="4" height="7" fill="#9a7c56"/><rect x="166" y="228" width="4" height="7" fill="#9a7c56"/><rect x="278" y="0" width="5" height="330" fill="#c6bca6"/><rect x="281" y="0" width="1" height="330" fill="#969a88"/><rect x="409" y="0" width="3" height="330" fill="#bfae90"/><g filter="url(#b05)"><path d="M326 100L372 95L376 150L383 210L394 262L402 330L336 330Z" fill="#bfcdb8"/><path d="M366 160Q384 215 394 262L401 330L386 330Q378 262 356 195Z" fill="#aab6a1" opacity="0.9" filter="url(#b2)"/><path d="M296 182L329 178L343 330L289 330Z" fill="#d7d5de"/><path d="M300 200L306 330L296 330Z" fill="#cfccd6"/><path d="M368 80L340 88L300 104L262 124L228 140L226 148L240 165L262 200L296 195L334 180L370 165Z" fill="#c8d4c2"/><path d="M228 148L262 200L286 196L252 165Z" fill="#bcc8b5"/><path d="M270 130L330 110L352 132L300 160Z" fill="#cfdaca" opacity="0.7"/><path d="M300 84Q310 76 320 84L324 98L314 106L302 100Z" fill="#e6d3c8"/><path d="M332 52L340 50L346 72L340 84L330 76Z" fill="#e6d3c8"/><path d="M340 66L360 62L362 82L344 88Z" fill="#d8d2de"/><path d="M352 5Q338 8 332 28Q330 48 333 66L337 64L336 30Q342 19 350 18Q362 19 366 32L366 66L369 120L368 150L378 150L378 56Q377 20 352 5Z" fill="#2e2723"/><path d="M336 29Q340 18 350 18Q362 19 366 32L365 52Q361 66 348 68Q339 64 336 52Z" fill="#e6d3c8"/><path d="M340 38L346 37M352 37L358 38" stroke="#6a5850" stroke-width="1.2"/><path d="M345 55L352 55" stroke="#c08a88" stroke-width="1.6"/></g><path d="M378 146 Q396 140 415 134 Q432 126 448 124 Q470 120 490 120 L490 330 L398.5 330 Q396 280 394 265 Q384 215 376.5 167 Q377 155 378 146" stroke="#ffffff" stroke-width="1" fill="none"/><path d="M378 146 Q396 140 415 134 Q432 126 448 124 Q470 120 490 120 L490 330 L398.5 330 Q396 280 394 265 Q384 215 376.5 167 Q377 155 378 146" stroke="#000000" stroke-width="1" fill="none" stroke-dasharray="2 2"/></g></svg>
<div style="position:absolute;left:223.9px;top:562.50px;font-size:15px;line-height:18.00px;color:#ffffff;white-space:nowrap;transform:scaleX(1.0004);transform-origin:0 0;-webkit-text-stroke:0.35px #ffffff;">复制背景层，把背景层移至人物上次，</div>
<div style="position:absolute;left:223.9px;top:589.40px;font-size:15px;line-height:18.00px;color:#ffffff;white-space:nowrap;transform:scaleX(0.9970);transform-origin:0 0;-webkit-text-stroke:0.35px #ffffff;">这样就挡住了裙子的位置（不用修掉了！哈哈)</div>
<div style="position:absolute;left:28px;top:625px;width:525px;height:15px;background:#2b2b2b;"></div>
<div style="position:absolute;left:30.5px;top:627.10px;font-size:9px;line-height:10.80px;color:#c8c8c8;white-space:nowrap;transform:scaleX(0.7959);transform-origin:0 0;">19.93%</div>
<div style="position:absolute;left:79px;top:627.10px;font-size:9px;line-height:10.80px;color:#a8a8a8;white-space:nowrap;transform:scaleX(0.7944);transform-origin:0 0;">文档:31.4M/464.5M</div>
<svg style="position:absolute;left:164px;top:629px;" width="20" height="8" viewBox="0 0 20 8"><path d="M2 1L5 4L2 7" stroke="#aaa" fill="none"/><path d="M16 1L13 4L16 7" stroke="#777" fill="none"/></svg>
<div style="position:absolute;left:300px;top:627px;width:253px;height:10px;background:#242424;"></div>
<div style="position:absolute;left:301px;top:628px;width:135px;height:8px;background:#3c3c3c;"></div>
<div style="position:absolute;left:553px;top:69px;width:11px;height:556px;background:#262626;"></div>
<div style="position:absolute;left:554px;top:226px;width:9px;height:231px;background:#3a3a3a;"></div>
<svg style="position:absolute;left:554px;top:616px;" width="9" height="8" viewBox="0 0 9 8"><path d="M2 2L4.5 4.5L7 2" stroke="#888" fill="none"/></svg>
<div style="position:absolute;left:564px;top:40px;width:27px;height:600px;background:#2a2a2a;"></div>
<div style="position:absolute;left:564px;top:40px;width:27px;height:8px;background:#262626;"></div>
<div style="position:absolute;left:580px;top:43px;width:2px;height:2px;background:#8a8a8a;"></div>
<div style="position:absolute;left:583px;top:43px;width:2px;height:2px;background:#8a8a8a;"></div>
<div style="position:absolute;left:566px;top:49px;width:24px;height:408px;background:#303030;"></div>
<div style="position:absolute;left:566px;top:75px;width:24px;height:1px;background:#282828;"></div>
<div style="position:absolute;left:566px;top:99px;width:24px;height:1px;background:#282828;"></div>
<div style="position:absolute;left:566px;top:143px;width:24px;height:1px;background:#282828;"></div>
<div style="position:absolute;left:566px;top:170px;width:24px;height:1px;background:#282828;"></div>
<div style="position:absolute;left:566px;top:196px;width:24px;height:1px;background:#282828;"></div>
<div style="position:absolute;left:566px;top:221px;width:24px;height:1px;background:#282828;"></div>
<div style="position:absolute;left:566px;top:246px;width:24px;height:1px;background:#282828;"></div>
<div style="position:absolute;left:566px;top:271px;width:24px;height:1px;background:#282828;"></div>
<div style="position:absolute;left:566px;top:296px;width:24px;height:1px;background:#282828;"></div>
<div style="position:absolute;left:566px;top:322px;width:24px;height:1px;background:#282828;"></div>
<div style="position:absolute;left:566px;top:347px;width:24px;height:1px;background:#282828;"></div>
<div style="position:absolute;left:566px;top:440px;width:24px;height:1px;background:#282828;"></div>
<svg style="position:absolute;left:570px;top:54px;" width="16" height="16" viewBox="0 0 16 16"><circle cx="8" cy="8" r="5" fill="#666"/><circle cx="8" cy="8" r="3" fill="#ccc"/><path d="M8 1V4M8 12V15M1 8H4M12 8H15" stroke="#aaa" stroke-width="1.5"/></svg>
<svg style="position:absolute;left:570px;top:80px;" width="16" height="16" viewBox="0 0 16 16"><circle cx="10" cy="4" r="2.5" fill="#ddd"/><rect x="9" y="6" width="2" height="4" fill="#ddd"/><rect x="5" y="10" width="10" height="3" fill="#ddd"/><path d="M1 3H5M1 6H5" stroke="#bbb"/></svg>
<svg style="position:absolute;left:570px;top:106px;" width="16" height="16" viewBox="0 0 16 16"><rect x="2" y="8" width="5" height="5" fill="#ddd"/><rect x="5" y="10" width="5" height="5" fill="#888"/><path d="M10 2H14V13H12" stroke="#ddd" stroke-width="2" fill="none"/></svg>
<svg style="position:absolute;left:570px;top:123px;" width="16" height="16" viewBox="0 0 16 16"><rect x="1" y="9" width="5" height="5" fill="#ddd"/><text x="7" y="12" font-size="12" fill="#ddd" font-family="Liberation Sans">A</text></svg>
<svg style="position:absolute;left:570px;top:148px;" width="16" height="16" viewBox="0 0 16 16"><rect x="2" y="2" width="12" height="12" rx="2" fill="#ddd"/><text x="4" y="12" font-size="10" fill="#333" font-family="Liberation Serif">F</text></svg>
<svg style="position:absolute;left:569px;top:174px;" width="18" height="16" viewBox="0 0 18 16"><text x="1" y="12" font-size="12" font-style="italic" fill="#e8e8e8" font-family="Liberation Serif" font-weight="bold">TK</text><path d="M2 14Q9 11 16 14" stroke="#aaa" fill="none"/></svg>
<svg style="position:absolute;left:569px;top:202px;" width="18" height="16" viewBox="0 0 18 16"><defs><linearGradient id="tkg" x1="0" x2="1"><stop offset="0" stop-color="#f0f"/><stop offset="0.5" stop-color="#0c0"/><stop offset="1" stop-color="#f80"/></linearGradient></defs><rect x="2" y="2" width="14" height="13" fill="url(#tkg)" opacity="0.5"/><text x="1" y="13" font-size="12" font-style="italic" fill="#eee" font-family="Liberation Serif" font-weight="bold">TK</text></svg>
<svg style="position:absolute;left:569px;top:224px;" width="18" height="16" viewBox="0 0 18 16"><rect x="1" y="2" width="16" height="13" fill="#5c6a86"/><text x="1" y="13" font-size="12" font-style="italic" fill="#eee" font-family="Liberation Serif" font-weight="bold">TK</text></svg>
<svg style="position:absolute;left:569px;top:251px;" width="18" height="16" viewBox="0 0 18 16"><text x="1" y="10" font-size="11" font-style="italic" fill="#eee" font-family="Liberation Serif" font-weight="bold">TK</text><circle cx="4" cy="13" r="2" fill="#e02020"/><path d="M8 11L11 13L8 15Z" fill="#20c020"/><path d="M12 11L15 13L12 15Z" fill="#e0c020"/></svg>
<svg style="position:absolute;left:570px;top:276px;" width="16" height="16" viewBox="0 0 16 16"><circle cx="8" cy="8" r="6.5" stroke="#ccc" stroke-width="1.3" fill="none"/><path d="M5 5L11 11M11 5L5 11" stroke="#ccc"/></svg>
<svg style="position:absolute;left:570px;top:302px;" width="16" height="16" viewBox="0 0 16 16"><ellipse cx="8" cy="8" rx="7" ry="5.5" fill="#bbb"/><ellipse cx="8" cy="8" rx="4" ry="3" fill="#555"/></svg>
<svg style="position:absolute;left:570px;top:327px;" width="16" height="16" viewBox="0 0 16 16"><path d="M2 2L14 14M14 2L2 14" stroke="#eee" stroke-width="2"/></svg>
<svg style="position:absolute;left:569px;top:352px;" width="18" height="16" viewBox="0 0 18 16"><text x="1" y="11" font-size="11" font-style="italic" fill="#eee" font-family="Liberation Serif" font-weight="bold">TK</text><rect x="2" y="13" width="14" height="2" fill="#aaa"/></svg>
<svg style="position:absolute;left:570px;top:369px;" width="16" height="16" viewBox="0 0 16 16"><text x="3" y="12" font-size="13" fill="#eee" font-family="Liberation Serif">R</text></svg>
<svg style="position:absolute;left:570px;top:386px;" width="16" height="16" viewBox="0 0 16 16"><path d="M8 2L14 5V11L8 14L2 11V5Z" stroke="#ccc" fill="none" stroke-width="1.3"/><path d="M2 5L8 8L14 5M8 8V14" stroke="#ccc"/></svg>
<svg style="position:absolute;left:570px;top:404px;" width="16" height="16" viewBox="0 0 16 16"><circle cx="6" cy="6" r="4" stroke="#ddd" fill="none" stroke-width="1.5"/><rect x="11" y="3" width="3" height="6" fill="#ddd"/><rect x="2" y="12" width="12" height="2" fill="#ddd"/></svg>
<svg style="position:absolute;left:570px;top:422px;" width="16" height="16" viewBox="0 0 16 16"><path d="M3 3L12 6L10 13L2 10Z" stroke="#ddd" fill="none" stroke-width="1.2"/></svg>
<svg style="position:absolute;left:570px;top:440px;" width="16" height="16" viewBox="0 0 16 16"><text x="3" y="13" font-size="14" font-style="italic" fill="#ddd" font-family="Liberation Serif">A</text></svg>
<div style="position:absolute;left:591px;top:40px;width:156px;height:600px;background:#262626;"></div>
<div style="position:absolute;left:591px;top:40px;width:156px;height:8px;background:#262626;"></div>
<div style="position:absolute;left:737px;top:43px;width:2px;height:2px;background:#8a8a8a;"></div>
<div style="position:absolute;left:740px;top:43px;width:2px;height:2px;background:#8a8a8a;"></div>
<div style="position:absolute;left:592px;top:48px;width:154px;height:20px;background:#2a2a2a;"></div>
<div style="position:absolute;left:592px;top:49px;width:31px;height:19px;background:#3c3c3c;"></div>
<div style="position:absolute;left:597.4px;top:52.30px;font-size:9px;line-height:10.80px;color:#e0e0e0;white-space:nowrap;transform:scaleX(0.7370);transform-origin:0 0;">直方图</div>
<div style="position:absolute;left:630px;top:53px;font-size:7px;line-height:9px;color:#777;white-space:nowrap;">■E</div>
<div style="position:absolute;left:647px;top:53px;font-size:7px;line-height:9px;color:#777;white-space:nowrap;">■■</div>
<div style="position:absolute;left:664px;top:53px;font-size:7px;line-height:9px;color:#777;white-space:nowrap;">■■</div>
<div style="position:absolute;left:681px;top:53px;font-size:7px;line-height:9px;color:#777;white-space:nowrap;">■3</div>
<div style="position:absolute;left:698px;top:53px;font-size:7px;line-height:9px;color:#777;white-space:nowrap;">■■</div>
<div style="position:absolute;left:715px;top:53px;font-size:7px;line-height:9px;color:#777;white-space:nowrap;">■■</div>
<div style="position:absolute;left:730px;top:56px;width:8px;height:4px;background:#666;"></div>
<div style="position:absolute;left:592px;top:68px;width:154px;height:58px;background:#393939;"></div>
<div style="position:absolute;left:594px;top:72px;width:122px;height:52px;background:#444444;"></div>
<svg style="position:absolute;left:594px;top:72px;" width="122" height="52" viewBox="0 0 122 52"><path d="M39 52Q45 48 55 46Q65 44 72 40Q76 30 76 12L76 0L80 0Q80 25 82 35Q84 32 86 22L87 0L91 0Q92 30 96 45Q100 50 106 52Z" fill="#e8e8e8"/></svg>
<svg style="position:absolute;left:705px;top:76px;" width="9" height="9" viewBox="0 0 9 9"><path d="M4.5 0.5L8.5 8.5H0.5Z" fill="#e8e8e8"/><rect x="4" y="3" width="1" height="3" fill="#333"/></svg>
<div style="position:absolute;left:591px;top:126px;width:156px;height:2px;background:#262626;"></div>
<div style="position:absolute;left:592px;top:128px;width:154px;height:17px;background:#2a2a2a;"></div>
<div style="position:absolute;left:592px;top:129px;width:25px;height:16px;background:#3c3c3c;"></div>
<div style="position:absolute;left:596.6px;top:131.30px;font-size:9px;line-height:10.80px;color:#e0e0e0;white-space:nowrap;transform:scaleX(0.7722);transform-origin:0 0;">调整</div>
<div style="position:absolute;left:734px;top:134px;width:8px;height:4px;background:#666;"></div>
<div style="position:absolute;left:592px;top:145px;width:154px;height:70px;background:#393939;"></div>
<div style="position:absolute;left:596.6px;top:148.90px;font-size:9px;line-height:10.80px;color:#cfcfcf;white-space:nowrap;transform:scaleX(0.8028);transform-origin:0 0;">添加调整</div>
<svg style="position:absolute;left:621px;top:164px;" width="10" height="10" viewBox="0 0 10 10"><circle cx="5" cy="5" r="2.5" fill="#d8d8d8"/><path d="M5 0V2M5 8V10M0 5H2M8 5H10M1.5 1.5L2.8 2.8M7.2 7.2L8.5 8.5M1.5 8.5L2.8 7.2M7.2 2.8L8.5 1.5" stroke="#d8d8d8"/></svg>
<svg style="position:absolute;left:635px;top:164px;" width="10" height="10" viewBox="0 0 10 10"><path d="M0 10L1 6L2 8L3 4L4 7L5 3L6 6L7 2L8 5L9 4L10 10Z" fill="#d8d8d8"/></svg>
<svg style="position:absolute;left:651px;top:164px;" width="10" height="10" viewBox="0 0 10 10"><rect x="0.5" y="0.5" width="9" height="9" stroke="#d8d8d8" fill="none"/><path d="M3 0V10M0 4H10M2 9Q5 2 9 1" stroke="#d8d8d8" fill="none"/></svg>
<svg style="position:absolute;left:665px;top:164px;" width="10" height="10" viewBox="0 0 10 10"><rect x="0.5" y="0.5" width="9" height="9" stroke="#d8d8d8" fill="#444"/><path d="M0 10L10 0V10Z" fill="#d8d8d8"/></svg>
<svg style="position:absolute;left:680px;top:164px;" width="10" height="10" viewBox="0 0 10 10"><path d="M0.5 0.5H9.5L5 9.5Z" stroke="#d8d8d8" fill="none" stroke-width="1.2"/></svg>
<svg style="position:absolute;left:612px;top:181px;" width="10" height="10" viewBox="0 0 10 10"><rect x="0" y="0" width="10" height="10" fill="#d8d8d8"/><rect x="1" y="3" width="8" height="3" fill="#555"/></svg>
<svg style="position:absolute;left:628px;top:181px;" width="10" height="10" viewBox="0 0 10 10"><path d="M5 1V9M1 3H9M0 7Q2 9 4 7L2 3ZM6 7Q8 9 10 7L8 3Z" stroke="#d8d8d8" fill="none"/></svg>
<svg style="position:absolute;left:643px;top:181px;" width="10" height="10" viewBox="0 0 10 10"><rect x="0.5" y="0.5" width="9" height="9" stroke="#d8d8d8" fill="none"/><rect x="5" y="0" width="5" height="10" fill="#d8d8d8"/></svg>
<svg style="position:absolute;left:658px;top:181px;" width="10" height="10" viewBox="0 0 10 10"><rect x="0" y="3" width="8" height="6" rx="1" fill="#d8d8d8"/><circle cx="4" cy="6" r="2" fill="#444"/><circle cx="8" cy="8" r="2" stroke="#d8d8d8" fill="#393939"/></svg>
<svg style="position:absolute;left:673px;top:181px;" width="10" height="10" viewBox="0 0 10 10"><circle cx="3.5" cy="4" r="3" fill="#ccc"/><circle cx="6.5" cy="4" r="3" fill="#999"/><circle cx="5" cy="7" r="3" fill="#777"/></svg>
<svg style="position:absolute;left:688px;top:181px;" width="10" height="10" viewBox="0 0 10 10"><rect x="0.5" y="0.5" width="9" height="9" stroke="#d8d8d8" fill="none"/><path d="M3.5 0V10M6.5 0V10M0 3.5H10M0 6.5H10" stroke="#d8d8d8"/></svg>
<svg style="position:absolute;left:621px;top:197px;" width="10" height="10" viewBox="0 0 10 10"><rect x="0.5" y="0.5" width="9" height="9" stroke="#d8d8d8" fill="#555"/><path d="M2 8L8 2" stroke="#d8d8d8" stroke-width="2"/></svg>
<svg style="position:absolute;left:636px;top:197px;" width="10" height="10" viewBox="0 0 10 10"><rect x="0" y="0" width="10" height="10" fill="#666"/><path d="M0 8L8 0H10L0 10Z" fill="#d8d8d8"/></svg>
<svg style="position:absolute;left:651px;top:197px;" width="10" height="10" viewBox="0 0 10 10"><rect x="0" y="0" width="10" height="10" fill="#666"/><path d="M0 6L6 0H8L0 8ZM3 10L10 3V5L5 10Z" fill="#d8d8d8"/></svg>
<svg style="position:absolute;left:665px;top:197px;" width="10" height="10" viewBox="0 0 10 10"><rect x="0" y="0" width="10" height="10" fill="#777"/><path d="M0 0L5 5L0 10ZM10 0L5 5L10 10Z" fill="#ccc"/></svg>
<svg style="position:absolute;left:680px;top:197px;" width="10" height="10" viewBox="0 0 10 10"><defs><linearGradient id="gm" x1="0" x2="1"><stop offset="0" stop-color="#222"/><stop offset="1" stop-color="#ddd"/></linearGradient></defs><rect x="0" y="0" width="10" height="10" fill="url(#gm)"/></svg>
<div style="position:absolute;left:591px;top:214px;width:156px;height:2px;background:#262626;"></div>
<div style="position:absolute;left:592px;top:216px;width:154px;height:18px;background:#2a2a2a;"></div>
<div style="position:absolute;left:592px;top:217px;width:25px;height:17px;background:#3c3c3c;"></div>
<div style="position:absolute;left:596.6px;top:219.60px;font-size:9px;line-height:10.80px;color:#e0e0e0;white-space:nowrap;transform:scaleX(0.7167);transform-origin:0 0;">图层</div>
<div style="position:absolute;left:622.3px;top:219.60px;font-size:9px;line-height:10.80px;color:#a8a8a8;white-space:nowrap;transform:scaleX(0.7750);transform-origin:0 0;">历史记录</div>
<div style="position:absolute;left:662px;top:219.60px;font-size:9px;line-height:10.80px;color:#a8a8a8;white-space:nowrap;transform:scaleX(0.7778);transform-origin:0 0;">通道</div>
<div style="position:absolute;left:688.7px;top:219.60px;font-size:9px;line-height:10.80px;color:#a8a8a8;white-space:nowrap;transform:scaleX(0.7167);transform-origin:0 0;">动作</div>
<div style="position:absolute;left:733px;top:223px;width:8px;height:4px;background:#666;"></div>
<div style="position:absolute;left:592px;top:234px;width:154px;height:406px;background:#353535;"></div>
<div style="position:absolute;left:592px;top:238px;width:56px;height:14px;background:#262626;"></div>
<svg style="position:absolute;left:596px;top:240px;" width="9" height="10" viewBox="0 0 9 10"><circle cx="5.5" cy="3.5" r="2.6" stroke="#ddd" fill="none" stroke-width="1.2"/><path d="M3.5 5.5L1 9" stroke="#ddd" stroke-width="1.5"/></svg>
<div style="position:absolute;left:607.3px;top:239.10px;font-size:9px;line-height:10.80px;color:#d8d8d8;white-space:nowrap;transform:scaleX(0.8333);transform-origin:0 0;">类型</div>
<svg style="position:absolute;left:640px;top:243px;" width="7" height="5" viewBox="0 0 7 5"><path d="M1 1L3.5 3.5L6 1" stroke="#888" fill="none"/></svg>
<svg style="position:absolute;left:655px;top:240px;" width="10" height="10" viewBox="0 0 10 10"><rect x="1" y="2" width="8" height="6" stroke="#ddd" fill="none"/><rect x="2.5" y="5" width="5" height="2" fill="#ddd"/></svg>
<svg style="position:absolute;left:670px;top:240px;" width="10" height="10" viewBox="0 0 10 10"><circle cx="5" cy="5" r="4" fill="#ddd"/><path d="M5 1A4 4 0 0 1 5 9Z" fill="#444"/></svg>
<svg style="position:absolute;left:685px;top:240px;" width="10" height="10" viewBox="0 0 10 10"><path d="M1 1.5H9M5 1.5V9.5M3.5 9.5H6.5" stroke="#ddd" stroke-width="1.6"/></svg>
<svg style="position:absolute;left:700px;top:240px;" width="10" height="10" viewBox="0 0 10 10"><rect x="1.5" y="1.5" width="7" height="7" stroke="#ddd" fill="none"/><path d="M0 1.5H3M7 1.5H10M0 8.5H3M7 8.5H10" stroke="#ddd"/></svg>
<svg style="position:absolute;left:715px;top:240px;" width="10" height="10" viewBox="0 0 10 10"><path d="M2 1H7L9 3V9H2Z" stroke="#ddd" fill="none"/><rect x="4" y="5" width="4" height="4" fill="#ddd"/></svg>
<svg style="position:absolute;left:732px;top:236px;" width="10" height="10" viewBox="0 0 10 10"><circle cx="5" cy="5" r="3.5" fill="#cfcfcf"/><circle cx="5" cy="5" r="1.5" fill="#888"/></svg>
<div style="position:absolute;left:592px;top:256px;width:74px;height:13px;background:#262626;"></div>
<div style="position:absolute;left:598.8px;top:256.60px;font-size:9px;line-height:10.80px;color:#d8d8d8;white-space:nowrap;transform:scaleX(0.8333);transform-origin:0 0;">正常</div>
<svg style="position:absolute;left:657px;top:260px;" width="7" height="5" viewBox="0 0 7 5"><path d="M1 1L3.5 3.5L6 1" stroke="#888" fill="none"/></svg>
<div style="position:absolute;left:671px;top:256.20px;font-size:9px;line-height:10.80px;color:#9a9a9a;white-space:nowrap;transform:scaleX(0.7267);transform-origin:0 0;">不透明度：</div>
<div style="position:absolute;left:706px;top:255px;width:39px;height:14px;background:transparent;border:1px solid #2c2c2c;"></div>
<div style="position:absolute;left:707.2px;top:256.20px;font-size:9px;line-height:10.80px;color:#d0d0d0;white-space:nowrap;transform:scaleX(0.7815);transform-origin:0 0;">100%</div>
<svg style="position:absolute;left:732px;top:261px;" width="7" height="5" viewBox="0 0 7 5"><path d="M1 1L3.5 3.5L6 1" stroke="#888" fill="none"/></svg>
<div style="position:absolute;left:594.5px;top:273.60px;font-size:9px;line-height:10.80px;color:#c8c8c8;white-space:nowrap;transform:scaleX(0.7148);transform-origin:0 0;">锁定：</div>
<svg style="position:absolute;left:616px;top:274px;" width="10" height="10" viewBox="0 0 10 10"><rect x="1" y="1" width="8" height="8" fill="#ddd"/><rect x="1" y="1" width="2" height="2" fill="#444"/><rect x="5" y="1" width="2" height="2" fill="#444"/><rect x="3" y="3" width="2" height="2" fill="#444"/><rect x="7" y="3" width="2" height="2" fill="#444"/><rect x="1" y="5" width="2" height="2" fill="#444"/><rect x="5" y="5" width="2" height="2" fill="#444"/><rect x="3" y="7" width="2" height="2" fill="#444"/><rect x="7" y="7" width="2" height="2" fill="#444"/></svg>
<svg style="position:absolute;left:629px;top:274px;" width="10" height="10" viewBox="0 0 10 10"><path d="M9 1L4 6" stroke="#ddd" stroke-width="1.5"/><path d="M4 6Q1 7 1 10Q4 9 5 7Z" fill="#ddd"/></svg>
<svg style="position:absolute;left:643px;top:274px;" width="10" height="10" viewBox="0 0 10 10"><path d="M5 1V9M1 5H9" stroke="#ddd" stroke-width="1.2"/><path d="M5 0L3.5 2H6.5ZM5 10L3.5 8H6.5ZM0 5L2 3.5V6.5ZM10 5L8 3.5V6.5Z" fill="#ddd"/></svg>
<svg style="position:absolute;left:658px;top:274px;" width="10" height="10" viewBox="0 0 10 10"><path d="M1 9H9M2 2H6L9 8" stroke="#ddd" fill="none" stroke-width="1.2"/></svg>
<svg style="position:absolute;left:671px;top:274px;" width="10" height="10" viewBox="0 0 10 10"><path d="M3 5V3Q5 0 7 3V5" stroke="#ddd" fill="none" stroke-width="1.2"/><rect x="2" y="5" width="6" height="5" fill="#ddd"/></svg>
<div style="position:absolute;left:686.2px;top:273.10px;font-size:9px;line-height:10.80px;color:#9a9a9a;white-space:nowrap;transform:scaleX(0.6481);transform-origin:0 0;">填充：</div>
<div style="position:absolute;left:706px;top:271px;width:39px;height:14px;background:transparent;border:1px solid #2c2c2c;"></div>
<div style="position:absolute;left:707.2px;top:273.10px;font-size:9px;line-height:10.80px;color:#d0d0d0;white-space:nowrap;transform:scaleX(0.7815);transform-origin:0 0;">100%</div>
<svg style="position:absolute;left:732px;top:277px;" width="7" height="5" viewBox="0 0 7 5"><path d="M1 1L3.5 3.5L6 1" stroke="#888" fill="none"/></svg>
<div style="position:absolute;left:592px;top:286px;width:143px;height:335px;overflow:hidden;">
<svg style="position:absolute;left:-592px;top:-286px" width="747" height="640" viewBox="0 0 747 640"><defs><pattern id="chk" width="6" height="6" patternUnits="userSpaceOnUse"><rect width="6" height="6" fill="#ffffff"/><rect width="3" height="3" fill="#d6d6d6"/><rect x="3" y="3" width="3" height="3" fill="#d6d6d6"/></pattern><linearGradient id="img" x1="0" x2="1" y1="0" y2="1"><stop offset="0" stop-color="#d9d9cc"/><stop offset="0.5" stop-color="#c3c7b2"/><stop offset="1" stop-color="#dcdcd0"/></linearGradient></defs><rect x="592" y="333" width="143" height="18" fill="#4b4b4b" /><rect x="592" y="296.5" width="143" height="1" fill="#2b2b2b" /><path d="M624 287V293L622 291M624 287H626" stroke="#cfcfcf" fill="none" stroke-width="1"/><circle cx="636" cy="291" r="4" fill="#e0e0e0"/><path d="M639 288L633 294A4 4 0 0 0 639 288Z" fill="#555"/><rect x="640.5" y="284.0" width="20" height="14" fill="none" stroke="#555" stroke-width="1"/><rect x="641" y="284.5" width="19" height="13" fill="#000000" /><rect x="655" y="285.5" width="3" height="4" fill="#ddd"/><rect x="592" y="314.5" width="143" height="1" fill="#2b2b2b" /><path d="M621 302V308L619 306M621 302H623" stroke="#cfcfcf" fill="none" stroke-width="1"/><rect x="622" y="299.5" width="19" height="13" fill="url(#chk)" /><rect x="643.5" y="301.5" width="3" height="4" rx="1.2" stroke="#cfcfcf" fill="none" stroke-width="0.9"/><rect x="643.5" y="306.5" width="3" height="4" rx="1.2" stroke="#cfcfcf" fill="none" stroke-width="0.9"/><rect x="650.5" y="299.0" width="20" height="14" fill="none" stroke="#555" stroke-width="1"/><rect x="651" y="299.5" width="19" height="13" fill="#ffffff" /><rect x="592" y="332.5" width="143" height="1" fill="#2b2b2b" /><rect x="612" y="317.5" width="19" height="13" fill="#c9c9b2" /><ellipse cx="622" cy="325.5" rx="7" ry="4" fill="#a8b596" opacity="0.7"/><ellipse cx="616" cy="321.5" rx="3" ry="2" fill="#e8e8e2" opacity="0.7"/><rect x="634.5" y="319.5" width="3" height="4" rx="1.2" stroke="#cfcfcf" fill="none" stroke-width="0.9"/><rect x="634.5" y="324.5" width="3" height="4" rx="1.2" stroke="#cfcfcf" fill="none" stroke-width="0.9"/><rect x="640.5" y="317.0" width="20" height="14" fill="none" stroke="#555" stroke-width="1"/><rect x="641" y="317.5" width="19" height="13" fill="#ffffff" /><rect x="592" y="350.5" width="143" height="1" fill="#2b2b2b" /><g transform="translate(596 338)"><path d="M0 4Q5 -1 10 4Q5 9 0 4Z" fill="#e0e0e0"/><circle cx="5" cy="4" r="1.8" fill="#353535"/></g><rect x="612" y="335.5" width="19" height="13" fill="url(#chk)" /><rect x="622" y="335.5" width="9" height="13" fill="#c0c4ae" opacity="0.8"/><rect x="634.5" y="337.5" width="3" height="4" rx="1.2" stroke="#cfcfcf" fill="none" stroke-width="0.9"/><rect x="634.5" y="342.5" width="3" height="4" rx="1.2" stroke="#cfcfcf" fill="none" stroke-width="0.9"/><rect x="640.5" y="335.0" width="20" height="14" fill="none" stroke="#555" stroke-width="1"/><rect x="641" y="335.5" width="19" height="13" fill="#ffffff" /><rect x="592" y="368.5" width="143" height="1" fill="#2b2b2b" /><g transform="translate(596 356)"><path d="M0 4Q5 -1 10 4Q5 9 0 4Z" fill="#e0e0e0"/><circle cx="5" cy="4" r="1.8" fill="#353535"/></g><path d="M621 356V362L619 360M621 356H623" stroke="#cfcfcf" fill="none" stroke-width="1"/><circle cx="631" cy="360" r="4" fill="#e0e0e0"/><path d="M634 357L628 363A4 4 0 0 0 634 357Z" fill="#555"/><rect x="643.5" y="355.5" width="3" height="4" rx="1.2" stroke="#cfcfcf" fill="none" stroke-width="0.9"/><rect x="643.5" y="360.5" width="3" height="4" rx="1.2" stroke="#cfcfcf" fill="none" stroke-width="0.9"/><rect x="651.5" y="353.0" width="20" height="14" fill="none" stroke="#555" stroke-width="1"/><rect x="652" y="353.5" width="19" height="13" fill="#000000" /><rect x="666" y="354.5" width="3" height="4" fill="#ddd"/><rect x="592" y="386.5" width="143" height="1" fill="#2b2b2b" /><g transform="translate(596 374)"><path d="M0 4Q5 -1 10 4Q5 9 0 4Z" fill="#e0e0e0"/><circle cx="5" cy="4" r="1.8" fill="#353535"/></g><path d="M621 374V380L619 378M621 374H623" stroke="#cfcfcf" fill="none" stroke-width="1"/><rect x="622" y="371.5" width="19" height="13" fill="#c9bea8" /><rect x="643.5" y="373.5" width="3" height="4" rx="1.2" stroke="#cfcfcf" fill="none" stroke-width="0.9"/><rect x="643.5" y="378.5" width="3" height="4" rx="1.2" stroke="#cfcfcf" fill="none" stroke-width="0.9"/><rect x="651.5" y="371.0" width="20" height="14" fill="none" stroke="#555" stroke-width="1"/><rect x="652" y="371.5" width="19" height="13" fill="#000000" /><path d="M661 374.5Q666 376.5 664 383.5L661 381.5Z" fill="#ccc"/><g transform="translate(716 373)"><path d="M2.5 4.5V3Q5 -0.5 7.5 3V4.5" stroke="#cfcfcf" fill="none" stroke-width="1.1"/><rect x="1.5" y="4.5" width="7" height="5.5" stroke="#cfcfcf" fill="none" stroke-width="1.1"/></g><rect x="592" y="404.5" width="143" height="1" fill="#2b2b2b" /><g transform="translate(596 392)"><path d="M0 4Q5 -1 10 4Q5 9 0 4Z" fill="#e0e0e0"/><circle cx="5" cy="4" r="1.8" fill="#353535"/></g><path d="M621 392V398L619 396M621 392H623" stroke="#cfcfcf" fill="none" stroke-width="1"/><circle cx="631" cy="396" r="4" fill="#e0e0e0"/><path d="M634 393L628 399A4 4 0 0 0 634 393Z" fill="#555"/><rect x="643.5" y="391.5" width="3" height="4" rx="1.2" stroke="#cfcfcf" fill="none" stroke-width="0.9"/><rect x="643.5" y="396.5" width="3" height="4" rx="1.2" stroke="#cfcfcf" fill="none" stroke-width="0.9"/><rect x="651.5" y="389.0" width="20" height="14" fill="none" stroke="#555" stroke-width="1"/><rect x="652" y="389.5" width="19" height="13" fill="#000000" /><rect x="592" y="422.5" width="143" height="1" fill="#2b2b2b" /><g transform="translate(596 410)"><path d="M0 4Q5 -1 10 4Q5 9 0 4Z" fill="#e0e0e0"/><circle cx="5" cy="4" r="1.8" fill="#353535"/></g><path d="M621 410V416L619 414M621 410H623" stroke="#cfcfcf" fill="none" stroke-width="1"/><circle cx="631" cy="414" r="4" fill="#e0e0e0"/><path d="M634 411L628 417A4 4 0 0 0 634 411Z" fill="#555"/><rect x="643.5" y="409.5" width="3" height="4" rx="1.2" stroke="#cfcfcf" fill="none" stroke-width="0.9"/><rect x="643.5" y="414.5" width="3" height="4" rx="1.2" stroke="#cfcfcf" fill="none" stroke-width="0.9"/><rect x="651.5" y="407.0" width="20" height="14" fill="none" stroke="#555" stroke-width="1"/><rect x="652" y="407.5" width="19" height="13" fill="#ffffff" /><rect x="592" y="440.5" width="143" height="1" fill="#2b2b2b" /><g transform="translate(596 428)"><path d="M0 4Q5 -1 10 4Q5 9 0 4Z" fill="#e0e0e0"/><circle cx="5" cy="4" r="1.8" fill="#353535"/></g><path d="M621 428V434L619 432M621 428H623" stroke="#cfcfcf" fill="none" stroke-width="1"/><rect x="622" y="425.5" width="19" height="13" fill="#b4b9a3" /><rect x="643.5" y="427.5" width="3" height="4" rx="1.2" stroke="#cfcfcf" fill="none" stroke-width="0.9"/><rect x="643.5" y="432.5" width="3" height="4" rx="1.2" stroke="#cfcfcf" fill="none" stroke-width="0.9"/><rect x="651.5" y="425.0" width="20" height="14" fill="none" stroke="#555" stroke-width="1"/><rect x="652" y="425.5" width="19" height="13" fill="#000000" /><path d="M662 430.5L664 430.5L663 438.5Z" fill="#999"/><rect x="592" y="458.5" width="143" height="1" fill="#2b2b2b" /><g transform="translate(596 446)"><path d="M0 4Q5 -1 10 4Q5 9 0 4Z" fill="#e0e0e0"/><circle cx="5" cy="4" r="1.8" fill="#353535"/></g><path d="M621 446V452L619 450M621 446H623" stroke="#cfcfcf" fill="none" stroke-width="1"/><rect x="627" y="445.5" width="10" height="10" fill="#000000" stroke="#555" stroke-width="0.5"/><rect x="643.5" y="445.5" width="3" height="4" rx="1.2" stroke="#cfcfcf" fill="none" stroke-width="0.9"/><rect x="643.5" y="450.5" width="3" height="4" rx="1.2" stroke="#cfcfcf" fill="none" stroke-width="0.9"/><rect x="651.5" y="443.0" width="20" height="14" fill="none" stroke="#555" stroke-width="1"/><rect x="652" y="443.5" width="19" height="13" fill="#000000" /><path d="M660 456.5Q661 452.5 663 450.5L664 446.5Q666 444.5 666 448.5Q669 451.5 670 456.5Z" fill="#d8d8d8"/><rect x="592" y="476.5" width="143" height="1" fill="#2b2b2b" /><g transform="translate(596 464)"><path d="M0 4Q5 -1 10 4Q5 9 0 4Z" fill="#e0e0e0"/><circle cx="5" cy="4" r="1.8" fill="#353535"/></g><path d="M621 464V470L619 468M621 464H623" stroke="#cfcfcf" fill="none" stroke-width="1"/><circle cx="631" cy="468" r="4" fill="#e0e0e0"/><path d="M634 465L628 471A4 4 0 0 0 634 465Z" fill="#555"/><rect x="643.5" y="463.5" width="3" height="4" rx="1.2" stroke="#cfcfcf" fill="none" stroke-width="0.9"/><rect x="643.5" y="468.5" width="3" height="4" rx="1.2" stroke="#cfcfcf" fill="none" stroke-width="0.9"/><rect x="651.5" y="461.0" width="20" height="14" fill="none" stroke="#555" stroke-width="1"/><rect x="652" y="461.5" width="19" height="13" fill="#000000" /><path d="M660 474.5Q661 470.5 663 468.5L664 464.5Q666 462.5 666 466.5Q669 469.5 670 474.5Z" fill="#d8d8d8"/><rect x="592" y="494.5" width="143" height="1" fill="#2b2b2b" /><g transform="translate(596 482)"><path d="M0 4Q5 -1 10 4Q5 9 0 4Z" fill="#e0e0e0"/><circle cx="5" cy="4" r="1.8" fill="#353535"/></g><path d="M621 482V488L619 486M621 482H623" stroke="#cfcfcf" fill="none" stroke-width="1"/><circle cx="631" cy="486" r="4" fill="#e0e0e0"/><path d="M634 483L628 489A4 4 0 0 0 634 483Z" fill="#555"/><rect x="643.5" y="481.5" width="3" height="4" rx="1.2" stroke="#cfcfcf" fill="none" stroke-width="0.9"/><rect x="643.5" y="486.5" width="3" height="4" rx="1.2" stroke="#cfcfcf" fill="none" stroke-width="0.9"/><rect x="651.5" y="479.0" width="20" height="14" fill="none" stroke="#555" stroke-width="1"/><rect x="652" y="479.5" width="19" height="13" fill="#000000" /><path d="M660 492.5Q661 488.5 663 486.5L664 482.5Q666 480.5 666 484.5Q669 487.5 670 492.5Z" fill="#d8d8d8"/><rect x="592" y="512.5" width="143" height="1" fill="#2b2b2b" /><g transform="translate(596 500)"><path d="M0 4Q5 -1 10 4Q5 9 0 4Z" fill="#e0e0e0"/><circle cx="5" cy="4" r="1.8" fill="#353535"/></g><path d="M621 500V506L619 504M621 500H623" stroke="#cfcfcf" fill="none" stroke-width="1"/><circle cx="631" cy="504" r="4" fill="#e0e0e0"/><path d="M634 501L628 507A4 4 0 0 0 634 501Z" fill="#555"/><rect x="643.5" y="499.5" width="3" height="4" rx="1.2" stroke="#cfcfcf" fill="none" stroke-width="0.9"/><rect x="643.5" y="504.5" width="3" height="4" rx="1.2" stroke="#cfcfcf" fill="none" stroke-width="0.9"/><rect x="651.5" y="497.0" width="20" height="14" fill="none" stroke="#555" stroke-width="1"/><rect x="652" y="497.5" width="19" height="13" fill="#000000" /><path d="M664 501.5L667 499.5L665 503.5Z" fill="#eee"/><rect x="592" y="530.5" width="143" height="1" fill="#2b2b2b" /><g transform="translate(596 518)"><path d="M0 4Q5 -1 10 4Q5 9 0 4Z" fill="#e0e0e0"/><circle cx="5" cy="4" r="1.8" fill="#353535"/></g><path d="M621 518V524L619 522M621 518H623" stroke="#cfcfcf" fill="none" stroke-width="1"/><circle cx="631" cy="522" r="4" fill="#e0e0e0"/><path d="M634 519L628 525A4 4 0 0 0 634 519Z" fill="#555"/><rect x="643.5" y="517.5" width="3" height="4" rx="1.2" stroke="#cfcfcf" fill="none" stroke-width="0.9"/><rect x="643.5" y="522.5" width="3" height="4" rx="1.2" stroke="#cfcfcf" fill="none" stroke-width="0.9"/><rect x="651.5" y="515.0" width="20" height="14" fill="none" stroke="#555" stroke-width="1"/><rect x="652" y="515.5" width="19" height="13" fill="#000000" /><path d="M662 520.5L664 520.5L663 528.5Z" fill="#999"/><rect x="592" y="548.5" width="143" height="1" fill="#2b2b2b" /><g transform="translate(596 536)"><path d="M0 4Q5 -1 10 4Q5 9 0 4Z" fill="#e0e0e0"/><circle cx="5" cy="4" r="1.8" fill="#353535"/></g><path d="M621 536V542L619 540M621 536H623" stroke="#cfcfcf" fill="none" stroke-width="1"/><rect x="622" y="533.5" width="19" height="13" fill="url(#chk)" /><rect x="592" y="566.5" width="143" height="1" fill="#2b2b2b" /><g transform="translate(596 554)"><path d="M0 4Q5 -1 10 4Q5 9 0 4Z" fill="#e0e0e0"/><circle cx="5" cy="4" r="1.8" fill="#353535"/></g><rect x="612" y="551.5" width="19" height="13" fill="url(#img)" /><ellipse cx="624" cy="558.5" rx="4" ry="5" fill="#a9b39a" opacity="0.6"/><ellipse cx="617" cy="560.5" rx="3" ry="3" fill="#eeeeea" opacity="0.7"/><rect x="634.5" y="553.5" width="3" height="4" rx="1.2" stroke="#cfcfcf" fill="none" stroke-width="0.9"/><rect x="634.5" y="558.5" width="3" height="4" rx="1.2" stroke="#cfcfcf" fill="none" stroke-width="0.9"/><rect x="640.5" y="551.0" width="20" height="14" fill="none" stroke="#555" stroke-width="1"/><rect x="641" y="551.5" width="19" height="13" fill="#000000" /><path d="M649 564.5Q651 559.5 653 557.5L653 553.5Q655 551.5 656 555.5Q657 560.5 660 564.5Z" fill="#ffffff"/><rect x="592" y="584.5" width="143" height="1" fill="#2b2b2b" /><g transform="translate(596 572)"><path d="M0 4Q5 -1 10 4Q5 9 0 4Z" fill="#e0e0e0"/><circle cx="5" cy="4" r="1.8" fill="#353535"/></g><rect x="612" y="569.5" width="19" height="13" fill="url(#img)" /><ellipse cx="624" cy="576.5" rx="4" ry="5" fill="#a9b39a" opacity="0.6"/><ellipse cx="617" cy="578.5" rx="3" ry="3" fill="#eeeeea" opacity="0.7"/><rect x="634.5" y="571.5" width="3" height="4" rx="1.2" stroke="#cfcfcf" fill="none" stroke-width="0.9"/><rect x="634.5" y="576.5" width="3" height="4" rx="1.2" stroke="#cfcfcf" fill="none" stroke-width="0.9"/><rect x="640.5" y="569.0" width="20" height="14" fill="none" stroke="#555" stroke-width="1"/><rect x="641" y="569.5" width="19" height="13" fill="#000000" /><path d="M649 582.5Q651 577.5 653 575.5L653 571.5Q655 569.5 656 573.5Q657 578.5 660 582.5Z" fill="#ffffff"/><rect x="592" y="602.5" width="143" height="1" fill="#2b2b2b" /><g transform="translate(596 590)"><path d="M0 4Q5 -1 10 4Q5 9 0 4Z" fill="#e0e0e0"/><circle cx="5" cy="4" r="1.8" fill="#353535"/></g><rect x="612" y="587.5" width="19" height="13" fill="url(#chk)" /><rect x="592" y="620.5" width="143" height="1" fill="#2b2b2b" /><g transform="translate(596 608)"><path d="M0 4Q5 -1 10 4Q5 9 0 4Z" fill="#e0e0e0"/><circle cx="5" cy="4" r="1.8" fill="#353535"/></g><rect x="612" y="605.5" width="19" height="13" fill="#c9c9b2" /><ellipse cx="622" cy="613.5" rx="7" ry="4" fill="#a8b596" opacity="0.7"/><ellipse cx="616" cy="609.5" rx="3" ry="2" fill="#e8e8e2" opacity="0.7"/><g transform="translate(716 607)"><path d="M2.5 4.5V3Q5 -0.5 7.5 3V4.5" stroke="#cfcfcf" fill="none" stroke-width="1.1"/><rect x="1.5" y="4.5" width="7" height="5.5" stroke="#cfcfcf" fill="none" stroke-width="1.1"/></g><rect x="611.5" y="335.5" width="20" height="14" fill="none" stroke="#e6e6e6" stroke-width="1"/></svg>
<div style="position:absolute;left:75px;top:-0.40px;font-size:9px;line-height:10.80px;color:#e2e2e2;white-space:nowrap;transform:scaleX(0.8622);transform-origin:0 0;">曲线 2</div>
<div style="position:absolute;left:84px;top:15.10px;font-size:9px;line-height:10.80px;color:#e2e2e2;white-space:nowrap;transform:scaleX(0.8482);transform-origin:0 0;">图层 11 拷贝</div>
<div style="position:absolute;left:75px;top:33.10px;font-size:9px;line-height:10.80px;color:#e2e2e2;white-space:nowrap;transform:scaleX(0.8073);transform-origin:0 0;text-decoration:underline;">图层 8</div>
<div style="position:absolute;left:75px;top:51.10px;font-size:9px;line-height:10.80px;color:#e2e2e2;white-space:nowrap;transform:scaleX(0.8073);transform-origin:0 0;">图层 6</div>
<div style="position:absolute;left:85px;top:69.10px;font-size:9px;line-height:10.80px;color:#e2e2e2;white-space:nowrap;transform:scaleX(0.8779);transform-origin:0 0;">曲线 2</div>
<div style="position:absolute;left:85px;top:87.10px;font-size:9px;line-height:10.80px;color:#e2e2e2;white-space:nowrap;transform:scaleX(0.8333);transform-origin:0 0;">色彩</div>
<div style="position:absolute;left:85px;top:105.10px;font-size:9px;line-height:10.80px;color:#e2e2e2;white-space:nowrap;transform:scaleX(0.8230);transform-origin:0 0;">曲线 4</div>
<div style="position:absolute;left:85px;top:123.10px;font-size:9px;line-height:10.80px;color:#e2e2e2;white-space:nowrap;transform:scaleX(0.8543);transform-origin:0 0;">亮度/对比度 1</div>
<div style="position:absolute;left:85px;top:141.10px;font-size:9px;line-height:10.80px;color:#e2e2e2;white-space:nowrap;transform:scaleX(0.7956);transform-origin:0 0;">图层 3</div>
<div style="position:absolute;left:85px;top:159.10px;font-size:9px;line-height:10.80px;color:#e2e2e2;white-space:nowrap;transform:scaleX(0.8342);transform-origin:0 0;">颜色填充 1</div>
<div style="position:absolute;left:85px;top:177.10px;font-size:9px;line-height:10.80px;color:#e2e2e2;white-space:nowrap;transform:scaleX(0.8342);transform-origin:0 0;">可选颜色 1</div>
<div style="position:absolute;left:85px;top:195.10px;font-size:9px;line-height:10.80px;color:#e2e2e2;white-space:nowrap;transform:scaleX(0.8230);transform-origin:0 0;">色阶 1</div>
<div style="position:absolute;left:85px;top:213.10px;font-size:9px;line-height:10.80px;color:#e2e2e2;white-space:nowrap;transform:scaleX(0.7838);transform-origin:0 0;">曲线 1</div>
<div style="position:absolute;left:85px;top:231.10px;font-size:9px;line-height:10.80px;color:#e2e2e2;white-space:nowrap;transform:scaleX(0.7838);transform-origin:0 0;">曲线 3</div>
<div style="position:absolute;left:56px;top:249.10px;font-size:9px;line-height:10.80px;color:#e2e2e2;white-space:nowrap;transform:scaleX(0.8387);transform-origin:0 0;">图层 7</div>
<div style="position:absolute;left:75px;top:267.10px;font-size:9px;line-height:10.80px;color:#e2e2e2;white-space:nowrap;transform:scaleX(0.8693);transform-origin:0 0;text-decoration:underline;">图层 2 拷贝</div>
<div style="position:absolute;left:75px;top:285.10px;font-size:9px;line-height:10.80px;color:#e2e2e2;white-space:nowrap;transform:scaleX(0.8073);transform-origin:0 0;">图层 2</div>
<div style="position:absolute;left:45px;top:303.10px;font-size:9px;line-height:10.80px;color:#e2e2e2;white-space:nowrap;transform:scaleX(0.8505);transform-origin:0 0;">图层 4</div>
<div style="position:absolute;left:45px;top:321.10px;font-size:9px;line-height:10.80px;color:#e2e2e2;white-space:nowrap;transform:scaleX(0.7889);transform-origin:0 0;">背景</div>
</div>
<div style="position:absolute;left:735px;top:287px;width:10px;height:334px;background:#2a2a2a;"></div>
<div style="position:absolute;left:736px;top:357px;width:8px;height:254px;background:#474747;"></div>
<svg style="position:absolute;left:735px;top:289px;" width="10" height="7" viewBox="0 0 10 7"><path d="M2 5L5 2L8 5" stroke="#777" fill="none"/></svg>
<svg style="position:absolute;left:735px;top:612px;" width="10" height="7" viewBox="0 0 10 7"><path d="M2 2L5 5L8 2" stroke="#777" fill="none"/></svg>
<div style="position:absolute;left:745px;top:40px;width:2px;height:600px;background:#262626;"></div>
<div style="position:absolute;left:592px;top:621px;width:153px;height:19px;background:#353535;"></div>
<svg style="position:absolute;left:618px;top:625px;" width="10" height="11" viewBox="0 0 10 11"><path d="M1 5H4M6 5H9" stroke="#cfcfcf" stroke-width="2"/><rect x="3" y="4" width="4" height="2" fill="#cfcfcf"/></svg>
<svg style="position:absolute;left:635px;top:625px;" width="10" height="11" viewBox="0 0 10 11"><text x="0" y="9" font-size="10" font-style="italic" fill="#cfcfcf" font-family="Liberation Serif">fx</text></svg>
<svg style="position:absolute;left:651px;top:625px;" width="10" height="11" viewBox="0 0 10 11"><rect x="0" y="1" width="10" height="8" fill="#cfcfcf"/><circle cx="5" cy="5" r="2.5" fill="#353535"/></svg>
<svg style="position:absolute;left:668px;top:625px;" width="10" height="11" viewBox="0 0 10 11"><circle cx="5" cy="5" r="4" fill="#cfcfcf"/><path d="M8 2L2 8A4 4 0 0 0 8 2Z" fill="#555"/></svg>
<svg style="position:absolute;left:685px;top:625px;" width="10" height="11" viewBox="0 0 10 11"><path d="M0 2H4L5 3H10V9H0Z" fill="#cfcfcf"/></svg>
<svg style="position:absolute;left:702px;top:625px;" width="10" height="11" viewBox="0 0 10 11"><path d="M1 2H9V9H1Z" stroke="#cfcfcf" fill="none" stroke-width="1.2"/><rect x="1" y="2" width="4" height="4" fill="#cfcfcf"/></svg>
<svg style="position:absolute;left:717px;top:625px;" width="10" height="11" viewBox="0 0 10 11"><rect x="2" y="2" width="6" height="8" fill="#cfcfcf"/><rect x="1" y="1" width="8" height="1.2" fill="#cfcfcf"/><path d="M4 3V9M6 3V9" stroke="#555"/></svg>
</body></html>
